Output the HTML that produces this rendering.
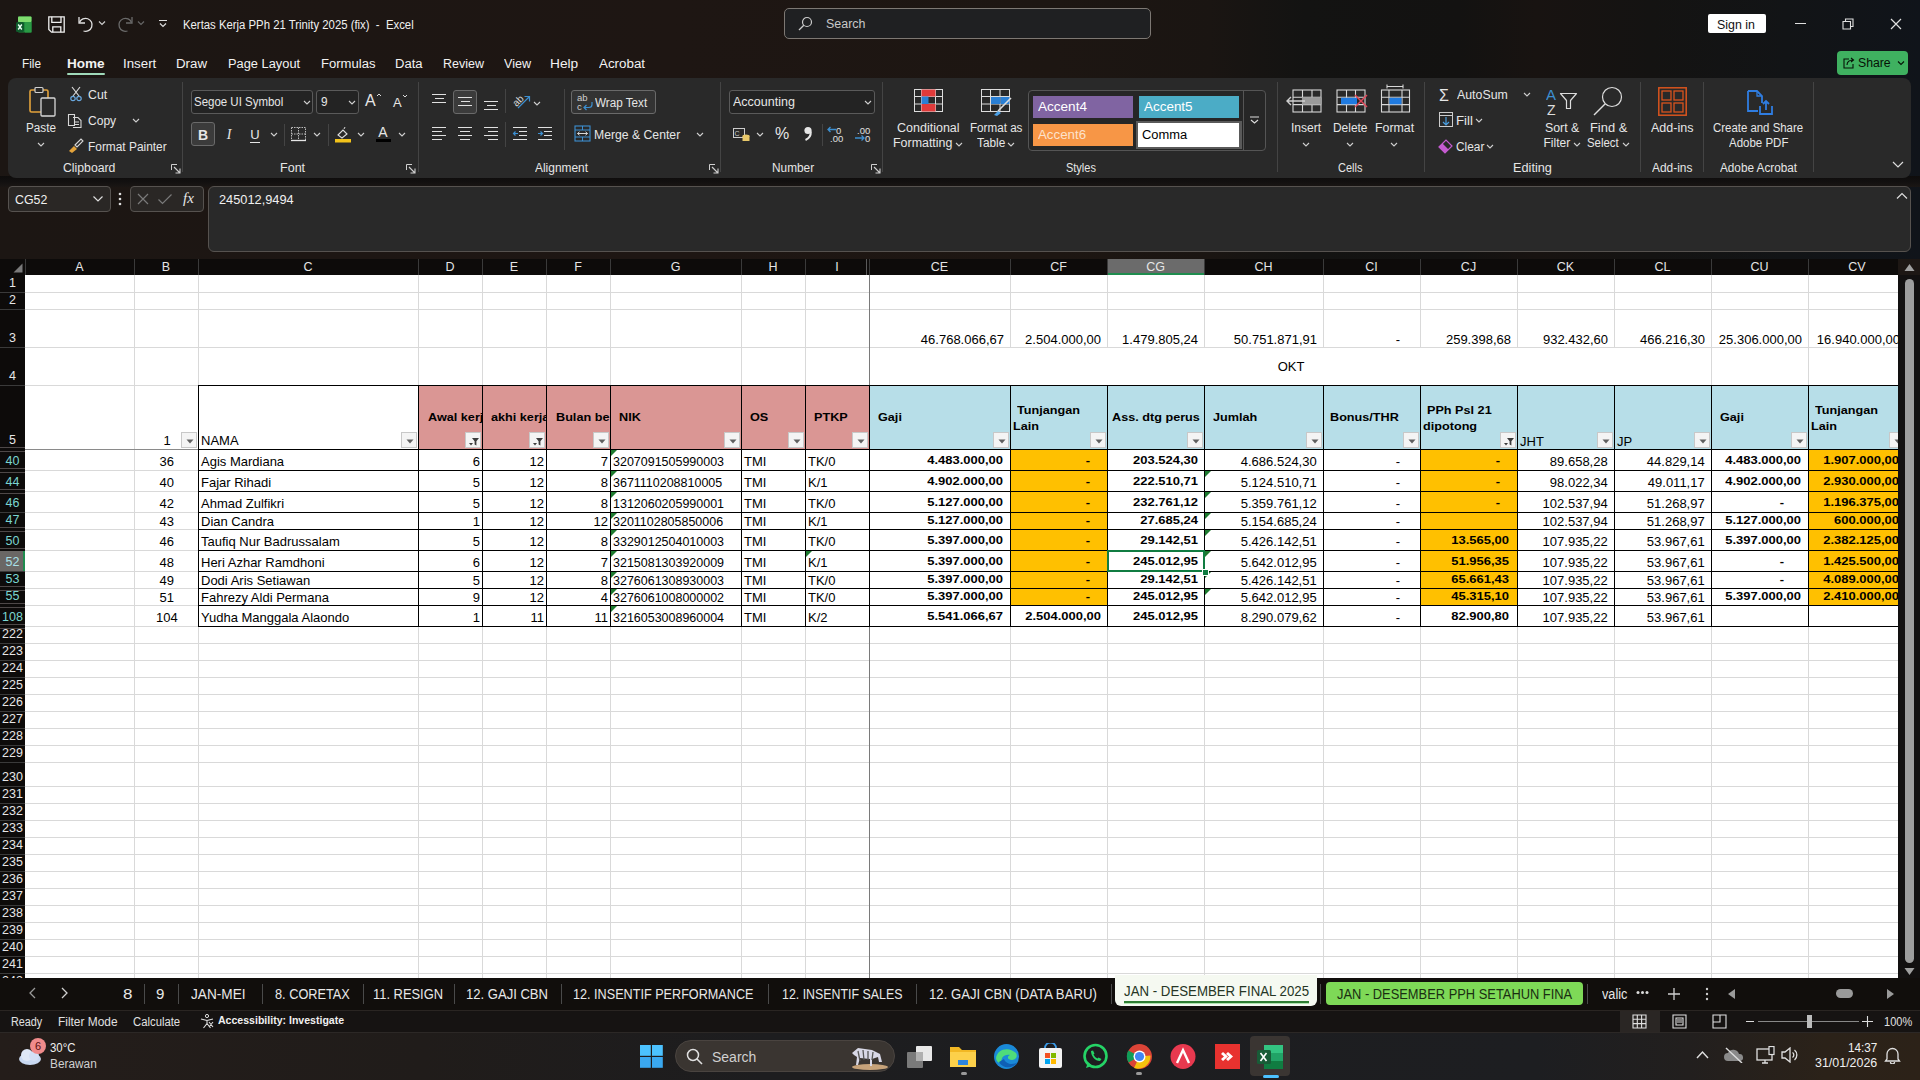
<!DOCTYPE html>
<html><head><meta charset="utf-8"><title>Excel</title>
<style>
html,body{margin:0;padding:0;width:1920px;height:1080px;overflow:hidden;background:#1d1714;}
body{position:relative;font-family:"Liberation Sans",sans-serif;}
body > div, body > svg{position:absolute;}
svg text{font-family:"Liberation Sans",sans-serif;}
</style></head><body>
<div style="left:0px;top:0px;width:1920px;height:259px;background:linear-gradient(90deg,#1c1613 0%,#1e1613 35%,#1d1612 55%,#1a1512 63%,#131312 68%,#131211 76%,#181311 80%,#141312 86%,#121416 93%,#10141a 100%)"></div>
<svg style="left:16px;top:15.5px" width="16" height="17" viewBox="0 0 16 17"><rect x="2" y="0.5" width="13.5" height="16" rx="1" fill="#1d8a3c"/><rect x="2" y="0.5" width="13.5" height="5.5" rx="1" fill="#7fdc6e"/><rect x="9" y="6" width="6.5" height="10.5" fill="#2a9a45"/><rect x="0" y="6" width="8" height="10" rx="1.5" fill="#0f5a2c"/><path d="M2.2 8.5l3.6 5M5.8 8.5l-3.6 5" stroke="#e8fff0" stroke-width="1.4"/></svg>
<svg style="left:47.5px;top:15.5px" width="17" height="17" viewBox="0 0 17 17"><path d="M0.8 0.8h15.4v15.4H3.5L0.8 13.5z" stroke="#f0f0f0" stroke-width="1.3" fill="none"/><path d="M3.8 0.8v5.6h9.2V0.8M4.8 16.2v-5.4h8v5.4" stroke="#f0f0f0" stroke-width="1.3" fill="none"/></svg>
<svg style="left:77px;top:15px" width="18" height="18" viewBox="0 0 18 18"><path d="M2 2v6h6" stroke="#e0e0e0" stroke-width="1.3" fill="none"/><path d="M2.5 7.5a6.5 6.5 0 1 1 4 8.5" stroke="#e0e0e0" stroke-width="1.3" fill="none"/></svg>
<svg style="left:98px;top:20px" width="8" height="6"><path d="M1 1.5l3 3 3-3" stroke="#ccc" stroke-width="1.2" fill="none"/></svg>
<svg style="left:116px;top:15px" width="18" height="18" viewBox="0 0 18 18"><path d="M16 2v6h-6" stroke="#6a6a6a" stroke-width="1.3" fill="none"/><path d="M15.5 7.5a6.5 6.5 0 1 0 -4 8.5" stroke="#6a6a6a" stroke-width="1.3" fill="none"/></svg>
<svg style="left:137px;top:20px" width="8" height="6"><path d="M1 1.5l3 3 3-3" stroke="#666" stroke-width="1.2" fill="none"/></svg>
<svg style="left:158px;top:19px" width="10" height="10"><path d="M1 1.5h8M2 4.5l3 3 3-3" stroke="#ddd" stroke-width="1.2" fill="none"/></svg>
<div style="left:182.59px;top:18.84px;font-size:12px;line-height:12px;color:#f0f0f0;font-weight:normal;white-space:pre;transform:scaleX(0.9450);transform-origin:0 0;">Kertas Kerja PPh 21 Trinity 2025 (fix)  -  Excel</div>
<div style="left:784px;top:8px;width:367px;height:31px;box-sizing:border-box;border:1px solid #7d7873;border-radius:5px;background:#1f2022"></div>
<svg style="left:797px;top:16px" width="16" height="16"><circle cx="10" cy="6" r="4.5" stroke="#ccc" stroke-width="1.2" fill="none"/><path d="M6.8 9.2L2 14" stroke="#ccc" stroke-width="1.3"/></svg>
<div style="left:825.94px;top:18.42px;font-size:12.5px;line-height:12.5px;color:#c8c8c8;font-weight:normal;white-space:pre;transform:scaleX(0.9951);transform-origin:0 0;">Search</div>
<div style="left:1708px;top:14px;width:58px;height:19px;background:#fff;border-radius:2px"></div>
<div style="left:1717.44px;top:19.14px;font-size:12px;line-height:12px;color:#111;font-weight:normal;white-space:pre;transform:scaleX(1.0328);transform-origin:0 0;">Sign in</div>
<div style="left:1795px;top:23px;width:11px;height:1px;background:#e0e0e0"></div>
<svg style="left:1842px;top:18px" width="12" height="12"><path d="M1 3.5h7.5V11H1z M3.5 3.5V1H11v7.5H8.5" stroke="#e0e0e0" stroke-width="1.1" fill="none"/></svg>
<svg style="left:1890px;top:18px" width="12" height="12"><path d="M1 1l10 10M11 1L1 11" stroke="#e0e0e0" stroke-width="1.2"/></svg>
<div style="left:21.86px;top:58.42px;font-size:12.5px;line-height:12.5px;color:#f2f2f2;font-weight:normal;white-space:pre;transform:scaleX(0.9428);transform-origin:0 0;">File</div>
<div style="left:66.62px;top:58.42px;font-size:12.5px;line-height:12.5px;color:#f2f2f2;font-weight:bold;white-space:pre;transform:scaleX(1.0841);transform-origin:0 0;">Home</div>
<div style="left:122.80px;top:58.42px;font-size:12.5px;line-height:12.5px;color:#f2f2f2;font-weight:normal;white-space:pre;transform:scaleX(1.0644);transform-origin:0 0;">Insert</div>
<div style="left:175.94px;top:58.42px;font-size:12.5px;line-height:12.5px;color:#f2f2f2;font-weight:normal;white-space:pre;transform:scaleX(1.0643);transform-origin:0 0;">Draw</div>
<div style="left:227.97px;top:58.42px;font-size:12.5px;line-height:12.5px;color:#f2f2f2;font-weight:normal;white-space:pre;transform:scaleX(1.0271);transform-origin:0 0;">Page Layout</div>
<div style="left:320.95px;top:58.42px;font-size:12.5px;line-height:12.5px;color:#f2f2f2;font-weight:normal;white-space:pre;transform:scaleX(1.0456);transform-origin:0 0;">Formulas</div>
<div style="left:394.96px;top:58.42px;font-size:12.5px;line-height:12.5px;color:#f2f2f2;font-weight:normal;white-space:pre;transform:scaleX(1.0443);transform-origin:0 0;">Data</div>
<div style="left:443.00px;top:58.42px;font-size:12.5px;line-height:12.5px;color:#f2f2f2;font-weight:normal;white-space:pre;transform:scaleX(1.0000);transform-origin:0 0;">Review</div>
<div style="left:503.94px;top:58.42px;font-size:12.5px;line-height:12.5px;color:#f2f2f2;font-weight:normal;white-space:pre;transform:scaleX(1.0070);transform-origin:0 0;">View</div>
<div style="left:549.90px;top:58.42px;font-size:12.5px;line-height:12.5px;color:#f2f2f2;font-weight:normal;white-space:pre;transform:scaleX(1.0956);transform-origin:0 0;">Help</div>
<div style="left:599.00px;top:58.42px;font-size:12.5px;line-height:12.5px;color:#f2f2f2;font-weight:normal;white-space:pre;transform:scaleX(1.0698);transform-origin:0 0;">Acrobat</div>
<div style="left:67px;top:73px;width:38px;height:2px;background:#9fd9b9;border-radius:1px"></div>
<div style="left:1837px;top:51px;width:71px;height:24px;background:#3fb160;border-radius:4px"></div>
<svg style="left:1842px;top:56px" width="14" height="14"><path d="M7 3H2v9h9V8" stroke="#061206" stroke-width="1.1" fill="none"/><path d="M5 9c0-3 2-5 6-5M9 2l2.5 2L9 6" stroke="#061206" stroke-width="1.1" fill="none"/></svg>
<div style="left:1857.95px;top:57.42px;font-size:12.5px;line-height:12.5px;color:#061206;font-weight:normal;white-space:pre;transform:scaleX(0.9786);transform-origin:0 0;">Share</div>
<svg style="left:1897px;top:60px" width="8" height="6"><path d="M1 1.5l3 3 3-3" stroke="#061206" stroke-width="1.1" fill="none"/></svg>
<div style="left:0;top:176px;width:1920px;height:11px;background:linear-gradient(180deg,#0e0c0b 0%,#121010 50%,#1a1614 100%)"></div>
<div style="left:8px;top:78px;width:1903px;height:100px;background:#292929;border-radius:8px"></div>
<div style="left:8px;top:186px;width:103px;height:26px;box-sizing:border-box;border:1px solid #56524f;border-radius:4px;background:#2a2725"></div>
<div style="left:14.68px;top:193.84px;font-size:12px;line-height:12px;color:#f0f0f0;font-weight:normal;white-space:pre;transform:scaleX(1.0292);transform-origin:0 0;">CG52</div>
<svg style="left:92px;top:194px" width="12" height="10"><path d="M1.5 2.5l4.5 4.5 4.5-4.5" stroke="#ddd" stroke-width="1.2" fill="none"/></svg>
<svg style="left:118px;top:191px" width="4" height="16"><circle cx="2" cy="3" r="1.3" fill="#ddd"/><circle cx="2" cy="8" r="1.3" fill="#ddd"/><circle cx="2" cy="13" r="1.3" fill="#ddd"/></svg>
<div style="left:130px;top:186px;width:74px;height:26px;box-sizing:border-box;border:1px solid #56524f;border-radius:4px;background:#2a2725"></div>
<svg style="left:136px;top:192px" width="14" height="14"><path d="M2 2l10 10M12 2L2 12" stroke="#7a7a7a" stroke-width="1.2"/></svg>
<svg style="left:157px;top:192px" width="16" height="14"><path d="M1.5 7.5l4 4 9-9" stroke="#7a7a7a" stroke-width="1.2" fill="none"/></svg>
<div style="left:183.00px;top:191.30px;font-size:15px;line-height:15px;color:#e8e8e8;font-weight:normal;white-space:pre;font-family:'Liberation Serif',serif;font-style:italic;">fx</div>
<div style="left:208px;top:186px;width:1703px;height:66px;box-sizing:border-box;border:1px solid #56524f;border-radius:6px;background:#292929"></div>
<div style="left:219.36px;top:193.84px;font-size:12px;line-height:12px;color:#f0f0f0;font-weight:normal;white-space:pre;transform:scaleX(1.0663);transform-origin:0 0;">245012,9494</div>
<svg style="left:1896px;top:192px" width="12" height="8"><path d="M1 6.5l5-5 5 5" stroke="#ddd" stroke-width="1.2" fill="none"/></svg>
<svg style="left:28px;top:86px" width="30" height="32" viewBox="0 0 30 32"><rect x="2" y="4" width="18" height="22" rx="1.5" stroke="#e3a33b" stroke-width="1.6" fill="none"/><rect x="7" y="1.5" width="8" height="5" rx="1" stroke="#d0d0d0" stroke-width="1.2" fill="#292929"/><rect x="13" y="12" width="14" height="18" rx="1" stroke="#d8d8d8" stroke-width="1.3" fill="#292929"/></svg>
<div style="left:26.06px;top:122.34px;font-size:12px;line-height:12px;color:#e6e6e6;font-weight:normal;white-space:pre;transform:scaleX(0.9774);transform-origin:0 0;">Paste</div>
<svg style="left:37px;top:142px" width="8" height="5" viewBox="0 0 8 5"><path d="M1 1l3 3 3-3" stroke="#d0d0d0" stroke-width="1.1" fill="none"/></svg>
<svg style="left:70px;top:86px" width="12" height="16" viewBox="0 0 12 16"><path d="M2 1l7 9M10 1L3 10" stroke="#d8d8d8" stroke-width="1.2"/><circle cx="3" cy="12.5" r="2.2" stroke="#6aa9e0" stroke-width="1.2" fill="none"/><circle cx="9" cy="12.5" r="2.2" stroke="#6aa9e0" stroke-width="1.2" fill="none"/></svg>
<div style="left:87.88px;top:88.84px;font-size:12px;line-height:12px;color:#e6e6e6;font-weight:normal;white-space:pre;transform:scaleX(1.0278);transform-origin:0 0;">Cut</div>
<svg style="left:67px;top:112px" width="17" height="16" viewBox="0 0 17 16"><path d="M1.5 2.5h6v11h-6zM6 5.5h5l3 3v7H6" stroke="#d8d8d8" stroke-width="1.1" fill="#292929"/><path d="M8 10h4M8 12.5h4" stroke="#d8d8d8" stroke-width="1"/></svg>
<div style="left:87.90px;top:115.34px;font-size:12px;line-height:12px;color:#e6e6e6;font-weight:normal;white-space:pre;transform:scaleX(1.0029);transform-origin:0 0;">Copy</div>
<svg style="left:132px;top:118px" width="8" height="5" viewBox="0 0 8 5"><path d="M1 1l3 3 3-3" stroke="#d0d0d0" stroke-width="1.1" fill="none"/></svg>
<svg style="left:67px;top:137px" width="18" height="16" viewBox="0 0 18 16"><path d="M2 14l5-5 3 3-5 4z" fill="#e3a33b"/><path d="M8 8l6-6 2 2-6 6z" stroke="#d8d8d8" stroke-width="1.1" fill="none"/></svg>
<div style="left:87.55px;top:140.84px;font-size:12px;line-height:12px;color:#e6e6e6;font-weight:normal;white-space:pre;transform:scaleX(0.9913);transform-origin:0 0;">Format Painter</div>
<div style="left:63.39px;top:161.84px;font-size:12px;line-height:12px;color:#e6e6e6;font-weight:normal;white-space:pre;transform:scaleX(1.0204);transform-origin:0 0;">Clipboard</div>
<svg style="left:171px;top:164px" width="10" height="10" viewBox="0 0 10 10"><path d="M0.5 6V0.5H6" stroke="#d0d0d0" stroke-width="1" fill="none"/><path d="M3 3l5.5 5.5M9 4.5V9H4.5" stroke="#d0d0d0" stroke-width="1.1" fill="none"/></svg>
<div style="left:182px;top:82px;width:1px;height:90px;background:#444"></div>
<div style="left:191px;top:90px;width:122px;height:24px;box-sizing:border-box;border:1px solid #5a5a5a;border-radius:3px;background:#232323"></div>
<div style="left:193.98px;top:96.14px;font-size:12px;line-height:12px;color:#e6e6e6;font-weight:normal;white-space:pre;transform:scaleX(0.9561);transform-origin:0 0;">Segoe UI Symbol</div>
<svg style="left:303px;top:100px" width="8" height="5" viewBox="0 0 8 5"><path d="M1 1l3 3 3-3" stroke="#d0d0d0" stroke-width="1.1" fill="none"/></svg>
<div style="left:316px;top:90px;width:43px;height:24px;box-sizing:border-box;border:1px solid #5a5a5a;border-radius:3px;background:#232323"></div>
<div style="left:321.47px;top:96.14px;font-size:12px;line-height:12px;color:#e6e6e6;font-weight:normal;white-space:pre;transform:scaleX(0.9857);transform-origin:0 0;">9</div>
<svg style="left:348px;top:100px" width="8" height="5" viewBox="0 0 8 5"><path d="M1 1l3 3 3-3" stroke="#d0d0d0" stroke-width="1.1" fill="none"/></svg>
<div style="left:365.00px;top:93.46px;font-size:16px;line-height:16px;color:#e6e6e6;font-weight:normal;white-space:pre;">A</div>
<svg style="left:376px;top:93px" width="6" height="4" viewBox="0 0 6 4"><path d="M1 3l2-2 2 2" stroke="#ddd" stroke-width="1" fill="none"/></svg>
<div style="left:393.00px;top:96.00px;font-size:13px;line-height:13px;color:#e6e6e6;font-weight:normal;white-space:pre;">A</div>
<svg style="left:402px;top:94px" width="6" height="4" viewBox="0 0 6 4"><path d="M1 1l2 2 2-2" stroke="#ddd" stroke-width="1" fill="none"/></svg>
<div style="left:191px;top:122px;width:24px;height:24px;box-sizing:border-box;border:1px solid #6a6a6a;border-radius:3px;background:#3b3b3b"></div>
<div style="left:-97.00px;top:128.15px;font-size:14px;line-height:14px;color:#e6e6e6;font-weight:bold;white-space:pre;width:600px;text-align:center;">B</div>
<div style="left:-71.00px;top:128.15px;font-size:14px;line-height:14px;color:#e6e6e6;font-weight:normal;white-space:pre;width:600px;text-align:center;font-family:'Liberation Serif',serif;font-style:italic">I</div>
<div style="left:-45.00px;top:128.00px;font-size:13px;line-height:13px;color:#e6e6e6;font-weight:normal;white-space:pre;width:600px;text-align:center;">U</div>
<div style="left:250px;top:142px;width:10px;height:1px;background:#e6e6e6"></div>
<svg style="left:270px;top:132px" width="8" height="5" viewBox="0 0 8 5"><path d="M1 1l3 3 3-3" stroke="#d0d0d0" stroke-width="1.1" fill="none"/></svg>
<div style="left:284px;top:124px;width:1px;height:22px;background:#444"></div>
<svg style="left:290px;top:126px" width="17" height="16" viewBox="0 0 17 16"><path d="M1.5 1.5h14v13h-14z" stroke="#bbb" stroke-width="1" stroke-dasharray="1.5 1" fill="none"/><path d="M8.5 1.5v13M1.5 8h14" stroke="#bbb" stroke-width="1" stroke-dasharray="1.5 1"/><path d="M1 14.5h15" stroke="#e6e6e6" stroke-width="1.3"/></svg>
<svg style="left:313px;top:132px" width="8" height="5" viewBox="0 0 8 5"><path d="M1 1l3 3 3-3" stroke="#d0d0d0" stroke-width="1.1" fill="none"/></svg>
<div style="left:328px;top:124px;width:1px;height:22px;background:#444"></div>
<svg style="left:335px;top:126px" width="17" height="17" viewBox="0 0 17 17"><path d="M3 9l5-5 4 4-5 4z" stroke="#ddd" stroke-width="1.1" fill="none"/><path d="M9 3l1-2" stroke="#ddd"/><rect x="0" y="13" width="16" height="3.5" fill="#f2c21a"/></svg>
<svg style="left:357px;top:132px" width="8" height="5" viewBox="0 0 8 5"><path d="M1 1l3 3 3-3" stroke="#d0d0d0" stroke-width="1.1" fill="none"/></svg>
<div style="left:83.00px;top:125.15px;font-size:14px;line-height:14px;color:#e6e6e6;font-weight:normal;white-space:pre;width:600px;text-align:center;">A</div>
<div style="left:376px;top:139px;width:15px;height:3px;background:#000"></div>
<svg style="left:398px;top:132px" width="8" height="5" viewBox="0 0 8 5"><path d="M1 1l3 3 3-3" stroke="#d0d0d0" stroke-width="1.1" fill="none"/></svg>
<div style="left:280.00px;top:161.84px;font-size:12px;line-height:12px;color:#e6e6e6;font-weight:normal;white-space:pre;transform:scaleX(1.0444);transform-origin:0 0;">Font</div>
<svg style="left:406px;top:164px" width="10" height="10" viewBox="0 0 10 10"><path d="M0.5 6V0.5H6" stroke="#d0d0d0" stroke-width="1" fill="none"/><path d="M3 3l5.5 5.5M9 4.5V9H4.5" stroke="#d0d0d0" stroke-width="1.1" fill="none"/></svg>
<div style="left:418px;top:82px;width:1px;height:90px;background:#444"></div>
<svg style="left:431px;top:92px" width="17" height="14" viewBox="0 0 17 14"><path d="M1 2.5H15" stroke="#e0e0e0" stroke-width="1"/><path d="M4 6.5H13" stroke="#e0e0e0" stroke-width="1"/><path d="M1 10.5H15" stroke="#e0e0e0" stroke-width="1"/></svg>
<div style="left:453px;top:90px;width:24px;height:24px;box-sizing:border-box;border:1px solid #6a6a6a;border-radius:3px;background:#3b3b3b"></div>
<svg style="left:457px;top:95px" width="17" height="14" viewBox="0 0 17 14"><path d="M1 2.5H15" stroke="#e0e0e0" stroke-width="1"/><path d="M4 6.5H13" stroke="#e0e0e0" stroke-width="1"/><path d="M1 10.5H15" stroke="#e0e0e0" stroke-width="1"/></svg>
<svg style="left:483px;top:99px" width="17" height="14" viewBox="0 0 17 14"><path d="M1 2.5H15" stroke="#e0e0e0" stroke-width="1"/><path d="M4 6.5H13" stroke="#e0e0e0" stroke-width="1"/><path d="M1 10.5H15" stroke="#e0e0e0" stroke-width="1"/></svg>
<div style="left:505px;top:89px;width:1px;height:24px;background:#444"></div>
<svg style="left:511px;top:91px" width="22" height="20" viewBox="0 0 22 20"><text x="1" y="13" font-size="10" fill="#d8d8d8" font-family="Liberation Sans" transform="rotate(-45 7 9)">ab</text><path d="M7 17l11-11M13.5 5.5h5v5" stroke="#3d8fd0" stroke-width="1.2" fill="none"/></svg>
<svg style="left:533px;top:101px" width="8" height="5" viewBox="0 0 8 5"><path d="M1 1l3 3 3-3" stroke="#d0d0d0" stroke-width="1.1" fill="none"/></svg>
<svg style="left:431px;top:125px" width="17" height="16" viewBox="0 0 17 16"><path d="M1 2.5H15" stroke="#e0e0e0" stroke-width="1"/><path d="M1 6.5H11" stroke="#e0e0e0" stroke-width="1"/><path d="M1 10.5H15" stroke="#e0e0e0" stroke-width="1"/><path d="M1 14.5H11" stroke="#e0e0e0" stroke-width="1"/></svg>
<svg style="left:457px;top:125px" width="17" height="16" viewBox="0 0 17 16"><path d="M1 2.5H15" stroke="#e0e0e0" stroke-width="1"/><path d="M3 6.5H13" stroke="#e0e0e0" stroke-width="1"/><path d="M1 10.5H15" stroke="#e0e0e0" stroke-width="1"/><path d="M3 14.5H13" stroke="#e0e0e0" stroke-width="1"/></svg>
<svg style="left:483px;top:125px" width="17" height="16" viewBox="0 0 17 16"><path d="M1 2.5H15" stroke="#e0e0e0" stroke-width="1"/><path d="M5 6.5H15" stroke="#e0e0e0" stroke-width="1"/><path d="M1 10.5H15" stroke="#e0e0e0" stroke-width="1"/><path d="M5 14.5H15" stroke="#e0e0e0" stroke-width="1"/></svg>
<div style="left:505px;top:122px;width:1px;height:25px;background:#444"></div>
<svg style="left:512px;top:125px" width="17" height="16" viewBox="0 0 17 16"><path d="M1 2.5H15" stroke="#e0e0e0" stroke-width="1"/><path d="M7 6.5H15" stroke="#e0e0e0" stroke-width="1"/><path d="M7 10.5H15" stroke="#e0e0e0" stroke-width="1"/><path d="M1 14.5H15" stroke="#e0e0e0" stroke-width="1"/><path d="M6 8.5H1.5M3.5 6.5l-2 2 2 2" stroke="#3d8fd0" stroke-width="1.2" fill="none"/></svg>
<svg style="left:537px;top:125px" width="17" height="16" viewBox="0 0 17 16"><path d="M1 2.5H15" stroke="#e0e0e0" stroke-width="1"/><path d="M7 6.5H15" stroke="#e0e0e0" stroke-width="1"/><path d="M7 10.5H15" stroke="#e0e0e0" stroke-width="1"/><path d="M1 14.5H15" stroke="#e0e0e0" stroke-width="1"/><path d="M1 8.5H5.5M3.5 6.5l2 2-2 2" stroke="#3d8fd0" stroke-width="1.2" fill="none"/></svg>
<div style="left:564px;top:89px;width:1px;height:61px;background:#444"></div>
<div style="left:571px;top:90px;width:85px;height:24px;box-sizing:border-box;border:1px solid #6a6a6a;border-radius:3px;background:#333"></div>
<svg style="left:576px;top:92px" width="18" height="20" viewBox="0 0 18 20"><text x="1" y="9" font-size="9.5" fill="#d0d0d0" font-family="Liberation Sans">ab</text><text x="1" y="18" font-size="9.5" fill="#d0d0d0" font-family="Liberation Sans">c</text><path d="M16 10v2.5c0 2-1 3-3 3H8M10.5 13l-2.5 2.5 2.5 2.5" stroke="#3d8fd0" stroke-width="1.2" fill="none"/></svg>
<div style="left:594.94px;top:96.64px;font-size:12px;line-height:12px;color:#e6e6e6;font-weight:normal;white-space:pre;transform:scaleX(0.9738);transform-origin:0 0;">Wrap Text</div>
<svg style="left:574px;top:125px" width="17" height="17" viewBox="0 0 17 17"><rect x="1" y="1" width="15" height="15" stroke="#3d8fd0" stroke-width="1.1" fill="none"/><path d="M1 5h15M1 12h15M8.5 1v4M8.5 12v4" stroke="#3d8fd0" stroke-width="1"/><path d="M3.5 8.5h10M5.5 6.8L3.5 8.5l2 1.7M11.5 6.8l2 1.7-2 1.7" stroke="#d8d8d8" stroke-width="1" fill="none"/></svg>
<div style="left:594.02px;top:129.14px;font-size:12px;line-height:12px;color:#e6e6e6;font-weight:normal;white-space:pre;transform:scaleX(1.0177);transform-origin:0 0;">Merge &amp; Center</div>
<svg style="left:696px;top:132px" width="8" height="5" viewBox="0 0 8 5"><path d="M1 1l3 3 3-3" stroke="#d0d0d0" stroke-width="1.1" fill="none"/></svg>
<div style="left:535.00px;top:161.84px;font-size:12px;line-height:12px;color:#e6e6e6;font-weight:normal;white-space:pre;transform:scaleX(0.9947);transform-origin:0 0;">Alignment</div>
<svg style="left:709px;top:164px" width="10" height="10" viewBox="0 0 10 10"><path d="M0.5 6V0.5H6" stroke="#d0d0d0" stroke-width="1" fill="none"/><path d="M3 3l5.5 5.5M9 4.5V9H4.5" stroke="#d0d0d0" stroke-width="1.1" fill="none"/></svg>
<div style="left:720px;top:82px;width:1px;height:90px;background:#444"></div>
<div style="left:729px;top:90px;width:146px;height:24px;box-sizing:border-box;border:1px solid #5a5a5a;border-radius:3px;background:#232323"></div>
<div style="left:732.50px;top:96.04px;font-size:12px;line-height:12px;color:#e6e6e6;font-weight:normal;white-space:pre;transform:scaleX(1.0417);transform-origin:0 0;">Accounting</div>
<svg style="left:864px;top:100px" width="8" height="5" viewBox="0 0 8 5"><path d="M1 1l3 3 3-3" stroke="#d0d0d0" stroke-width="1.1" fill="none"/></svg>
<svg style="left:733px;top:128px" width="17" height="14" viewBox="0 0 17 14"><rect x="0.5" y="0.5" width="11" height="9" stroke="#ccc" fill="none"/><text x="1.5" y="8" font-size="7" fill="#ccc" font-family="Liberation Sans">C</text><ellipse cx="13" cy="8" rx="3.5" ry="1.5" fill="#e8c86a"/><rect x="9.5" y="8" width="7" height="5" fill="#e8c86a"/></svg>
<svg style="left:756px;top:132px" width="8" height="5" viewBox="0 0 8 5"><path d="M1 1l3 3 3-3" stroke="#d0d0d0" stroke-width="1.1" fill="none"/></svg>
<div style="left:482.00px;top:126.46px;font-size:16px;line-height:16px;color:#e6e6e6;font-weight:normal;white-space:pre;width:600px;text-align:center;">%</div>
<svg style="left:803px;top:126px" width="10" height="15" viewBox="0 0 10 15"><circle cx="5" cy="4.5" r="3.6" fill="#e6e6e6"/><path d="M7.8 5.5C8 9.5 6 12.5 2.5 14" stroke="#e6e6e6" stroke-width="2" fill="none"/></svg>
<div style="left:822px;top:124px;width:1px;height:22px;background:#444"></div>
<svg style="left:826px;top:125px" width="20" height="18" viewBox="0 0 20 18"><text x="10" y="8.5" font-size="9.5" fill="#e0e0e0" font-family="Liberation Sans">0</text><text x="4" y="16.5" font-size="9.5" fill="#e0e0e0" font-family="Liberation Sans">.00</text><path d="M10 4.5H2M4.5 2L2 4.5 4.5 7" stroke="#3d8fd0" stroke-width="1.3" fill="none"/></svg>
<svg style="left:852px;top:125px" width="20" height="18" viewBox="0 0 20 18"><text x="5" y="8.5" font-size="9.5" fill="#e0e0e0" font-family="Liberation Sans">.00</text><text x="13" y="16.5" font-size="9.5" fill="#e0e0e0" font-family="Liberation Sans">0</text><path d="M3 13h9M9.5 10.5L12 13l-2.5 2.5" stroke="#3d8fd0" stroke-width="1.3" fill="none"/></svg>
<div style="left:772.05px;top:161.84px;font-size:12px;line-height:12px;color:#e6e6e6;font-weight:normal;white-space:pre;transform:scaleX(0.9875);transform-origin:0 0;">Number</div>
<svg style="left:871px;top:164px" width="10" height="10" viewBox="0 0 10 10"><path d="M0.5 6V0.5H6" stroke="#d0d0d0" stroke-width="1" fill="none"/><path d="M3 3l5.5 5.5M9 4.5V9H4.5" stroke="#d0d0d0" stroke-width="1.1" fill="none"/></svg>
<div style="left:882px;top:82px;width:1px;height:90px;background:#444"></div>
<svg style="left:914px;top:89px" width="29" height="23" viewBox="0 0 29 23"><rect x="0.5" y="0.5" width="28" height="22" fill="none" stroke="#ddd"/><path d="M0.5 7.5h28M0.5 15h28M7.5 0.5v22M21.5 0.5v22" stroke="#ddd"/><rect x="7.5" y="0.5" width="14" height="7" fill="#e03a3a"/><rect x="7.5" y="15" width="14" height="7.5" fill="#e03a3a"/><rect x="7.5" y="7.5" width="7" height="7.5" fill="#2a7fd4"/></svg>
<div style="left:896.97px;top:121.84px;font-size:12px;line-height:12px;color:#e6e6e6;font-weight:normal;white-space:pre;transform:scaleX(1.0423);transform-origin:0 0;">Conditional</div>
<div style="left:892.71px;top:137.34px;font-size:12px;line-height:12px;color:#e6e6e6;font-weight:normal;white-space:pre;transform:scaleX(1.0356);transform-origin:0 0;">Formatting</div>
<svg style="left:955px;top:142px" width="8" height="5" viewBox="0 0 8 5"><path d="M1 1l3 3 3-3" stroke="#d0d0d0" stroke-width="1.1" fill="none"/></svg>
<svg style="left:981px;top:89px" width="32" height="28" viewBox="0 0 32 28"><rect x="0.5" y="0.5" width="28" height="22" fill="none" stroke="#ddd"/><path d="M0.5 7.5h28M0.5 15h28M9.5 0.5v22M19 0.5v22" stroke="#ddd"/><rect x="10" y="8" width="9" height="7" fill="#2a7fd4"/><rect x="19.5" y="8" width="9" height="7" fill="#2a7fd4"/><path d="M13 26l4-4 3 2-4 3z" fill="#4aa0e6"/><path d="M17 22l13-13" stroke="#ddd" stroke-width="1.6"/></svg>
<div style="left:969.67px;top:121.84px;font-size:12px;line-height:12px;color:#e6e6e6;font-weight:normal;white-space:pre;transform:scaleX(0.9711);transform-origin:0 0;">Format as</div>
<div style="left:976.76px;top:137.34px;font-size:12px;line-height:12px;color:#e6e6e6;font-weight:normal;white-space:pre;transform:scaleX(0.9857);transform-origin:0 0;">Table</div>
<svg style="left:1006.5px;top:142px" width="8" height="5" viewBox="0 0 8 5"><path d="M1 1l3 3 3-3" stroke="#d0d0d0" stroke-width="1.1" fill="none"/></svg>
<div style="left:1028px;top:90px;width:238px;height:61px;box-sizing:border-box;border:1px solid #555;border-radius:4px;background:#262626"></div>
<div style="left:1033px;top:96px;width:100px;height:22px;background:#8064a2"></div>
<div style="left:1037.50px;top:101.34px;font-size:12px;line-height:12px;color:#fff;font-weight:normal;white-space:pre;transform:scaleX(1.1290);transform-origin:0 0;">Accent4</div>
<div style="left:1139px;top:96px;width:100px;height:22px;background:#4bacc6"></div>
<div style="left:1144.00px;top:101.34px;font-size:12px;line-height:12px;color:#fff;font-weight:normal;white-space:pre;transform:scaleX(1.1204);transform-origin:0 0;">Accent5</div>
<div style="left:1033px;top:124px;width:100px;height:22px;background:#f79646"></div>
<div style="left:1037.50px;top:129.34px;font-size:12px;line-height:12px;color:#fde2cc;font-weight:normal;white-space:pre;transform:scaleX(1.1088);transform-origin:0 0;">Accent6</div>
<div style="left:1136px;top:121px;width:106px;height:28px;background:#5a5a5a"></div>
<div style="left:1138px;top:123px;width:101px;height:24px;background:#fff"></div>
<div style="left:1142.36px;top:129.34px;font-size:12px;line-height:12px;color:#000;font-weight:normal;white-space:pre;transform:scaleX(1.0749);transform-origin:0 0;">Comma</div>
<div style="left:1243px;top:91px;width:1px;height:59px;background:#555"></div>
<svg style="left:1249px;top:116px" width="11" height="8" viewBox="0 0 11 8"><path d="M1 1h9M2 4l3.5 3 3.5-3" stroke="#ddd" stroke-width="1.1" fill="none"/></svg>
<div style="left:1065.51px;top:161.84px;font-size:12px;line-height:12px;color:#e6e6e6;font-weight:normal;white-space:pre;transform:scaleX(0.9137);transform-origin:0 0;">Styles</div>
<div style="left:1277px;top:82px;width:1px;height:90px;background:#444"></div>
<svg style="left:1285px;top:89px" width="40" height="24" viewBox="0 0 40 24"><rect x="8" y="1" width="28" height="22" stroke="#d8d8d8" stroke-width="1.1" fill="none"/><path d="M17.5 1v22M27 1v22M8 8.3h28M8 15.6h28" stroke="#d8d8d8" stroke-width="1.1"/><rect x="17" y="8.3" width="20" height="7.3" fill="#9a9a9a"/><path d="M20 12H2M6 8L2 12l4 4" stroke="#cfcfcf" stroke-width="1.4" fill="none"/></svg>
<div style="left:1290.91px;top:121.84px;font-size:12px;line-height:12px;color:#e6e6e6;font-weight:normal;white-space:pre;transform:scaleX(1.0049);transform-origin:0 0;">Insert</div>
<svg style="left:1302px;top:142px" width="8" height="5" viewBox="0 0 8 5"><path d="M1 1l3 3 3-3" stroke="#d0d0d0" stroke-width="1.1" fill="none"/></svg>
<svg style="left:1336px;top:89px" width="32" height="24" viewBox="0 0 32 24"><rect x="1" y="1" width="28" height="22" stroke="#d8d8d8" stroke-width="1.1" fill="none"/><path d="M10.5 1v22M19.5 1v22M1 8.3h28M1 15.6h28" stroke="#d8d8d8" stroke-width="1.1"/><rect x="5" y="8.8" width="16" height="6.5" fill="#1f7ae0"/><path d="M19 6l12 12M31 6L19 18" stroke="#e0485a" stroke-width="1.5"/></svg>
<div style="left:1333.05px;top:121.84px;font-size:12px;line-height:12px;color:#e6e6e6;font-weight:normal;white-space:pre;transform:scaleX(0.9946);transform-origin:0 0;">Delete</div>
<svg style="left:1346px;top:142px" width="8" height="5" viewBox="0 0 8 5"><path d="M1 1l3 3 3-3" stroke="#d0d0d0" stroke-width="1.1" fill="none"/></svg>
<svg style="left:1380px;top:84px" width="31" height="30" viewBox="0 0 31 30"><path d="M7 2.5h16M7 0.5v4M23 0.5v4" stroke="#d8d8d8" stroke-width="1.1"/><rect x="1.5" y="6" width="28" height="22" stroke="#d8d8d8" stroke-width="1.1" fill="none"/><path d="M9 6v22M22 6v22M1.5 13.3h28M1.5 20.6h28" stroke="#d8d8d8" stroke-width="1.1"/><rect x="9.5" y="13.8" width="12" height="6.5" fill="#1f7ae0"/></svg>
<div style="left:1375.01px;top:121.84px;font-size:12px;line-height:12px;color:#e6e6e6;font-weight:normal;white-space:pre;transform:scaleX(1.0281);transform-origin:0 0;">Format</div>
<svg style="left:1390px;top:142px" width="8" height="5" viewBox="0 0 8 5"><path d="M1 1l3 3 3-3" stroke="#d0d0d0" stroke-width="1.1" fill="none"/></svg>
<div style="left:1338.45px;top:161.84px;font-size:12px;line-height:12px;color:#e6e6e6;font-weight:normal;white-space:pre;transform:scaleX(0.9151);transform-origin:0 0;">Cells</div>
<div style="left:1424px;top:82px;width:1px;height:90px;background:#444"></div>
<div style="left:1439.00px;top:88.46px;font-size:16px;line-height:16px;color:#e6e6e6;font-weight:normal;white-space:pre;">Σ</div>
<div style="left:1457.00px;top:88.84px;font-size:12px;line-height:12px;color:#e6e6e6;font-weight:normal;white-space:pre;transform:scaleX(1.0288);transform-origin:0 0;">AutoSum</div>
<svg style="left:1523px;top:92px" width="8" height="5" viewBox="0 0 8 5"><path d="M1 1l3 3 3-3" stroke="#d0d0d0" stroke-width="1.1" fill="none"/></svg>
<svg style="left:1439px;top:112px" width="14" height="16" viewBox="0 0 14 16"><rect x="0.5" y="0.5" width="13" height="14" stroke="#ccc" fill="none"/><path d="M0.5 3.5h13" stroke="#ccc"/><path d="M7 5v8M4 10l3 3 3-3" stroke="#4a9ee0" stroke-width="1.2" fill="none"/></svg>
<div style="left:1455.94px;top:115.34px;font-size:12px;line-height:12px;color:#e6e6e6;font-weight:normal;white-space:pre;transform:scaleX(1.1062);transform-origin:0 0;">Fill</div>
<svg style="left:1475px;top:118px" width="8" height="5" viewBox="0 0 8 5"><path d="M1 1l3 3 3-3" stroke="#d0d0d0" stroke-width="1.1" fill="none"/></svg>
<svg style="left:1438px;top:138px" width="16" height="16" viewBox="0 0 16 16"><path d="M1 9l7-7 6 6-7 7z" stroke="#c45bd0" stroke-width="1.2" fill="none"/><path d="M1 9l3.5-3.5 6 6L7 15z" fill="#c45bd0"/></svg>
<div style="left:1456.41px;top:140.84px;font-size:12px;line-height:12px;color:#e6e6e6;font-weight:normal;white-space:pre;transform:scaleX(0.9878);transform-origin:0 0;">Clear</div>
<svg style="left:1486px;top:144px" width="8" height="5" viewBox="0 0 8 5"><path d="M1 1l3 3 3-3" stroke="#d0d0d0" stroke-width="1.1" fill="none"/></svg>
<svg style="left:1546px;top:86px" width="34" height="30" viewBox="0 0 34 30"><text x="0" y="14" font-size="15" fill="#3d8fd0" font-family="Liberation Sans">A</text><text x="1" y="28.5" font-size="14" fill="#dcdcdc" font-family="Liberation Sans">Z</text><path d="M14.5 7.5h16l-6 7v8l-4 0v-8z" stroke="#dcdcdc" stroke-width="1.2" fill="none" stroke-linejoin="round"/></svg>
<div style="left:1545.44px;top:121.84px;font-size:12px;line-height:12px;color:#e6e6e6;font-weight:normal;white-space:pre;transform:scaleX(1.0282);transform-origin:0 0;">Sort &amp;</div>
<div style="left:1543.54px;top:137.34px;font-size:12px;line-height:12px;color:#e6e6e6;font-weight:normal;white-space:pre;transform:scaleX(1.0000);transform-origin:0 0;">Filter</div>
<svg style="left:1573px;top:142px" width="8" height="5" viewBox="0 0 8 5"><path d="M1 1l3 3 3-3" stroke="#d0d0d0" stroke-width="1.1" fill="none"/></svg>
<svg style="left:1593px;top:86px" width="32" height="30" viewBox="0 0 32 30"><circle cx="19" cy="11" r="9.5" stroke="#ddd" stroke-width="1.2" fill="none"/><path d="M12 18L1 29" stroke="#ddd" stroke-width="1.4"/></svg>
<div style="left:1589.97px;top:121.84px;font-size:12px;line-height:12px;color:#e6e6e6;font-weight:normal;white-space:pre;transform:scaleX(1.0733);transform-origin:0 0;">Find &amp;</div>
<div style="left:1587.49px;top:137.34px;font-size:12px;line-height:12px;color:#e6e6e6;font-weight:normal;white-space:pre;transform:scaleX(0.9480);transform-origin:0 0;">Select</div>
<svg style="left:1622px;top:142px" width="8" height="5" viewBox="0 0 8 5"><path d="M1 1l3 3 3-3" stroke="#d0d0d0" stroke-width="1.1" fill="none"/></svg>
<div style="left:1512.98px;top:161.84px;font-size:12px;line-height:12px;color:#e6e6e6;font-weight:normal;white-space:pre;transform:scaleX(1.0596);transform-origin:0 0;">Editing</div>
<div style="left:1640px;top:82px;width:1px;height:90px;background:#444"></div>
<svg style="left:1658px;top:87px" width="29" height="29" viewBox="0 0 29 29"><rect x="0.8" y="0.8" width="27.4" height="27.4" stroke="#d9541e" stroke-width="1.5" fill="none"/><rect x="4" y="4" width="9" height="9" stroke="#d9541e" stroke-width="1.3" fill="none"/><rect x="16" y="4" width="9" height="9" stroke="#d9541e" stroke-width="1.3" fill="none"/><rect x="4" y="16" width="9" height="9" stroke="#d9541e" stroke-width="1.3" fill="none"/><rect x="16" y="16" width="9" height="9" stroke="#d9541e" stroke-width="1.3" fill="none"/></svg>
<div style="left:1651.00px;top:121.84px;font-size:12px;line-height:12px;color:#e6e6e6;font-weight:normal;white-space:pre;transform:scaleX(1.0432);transform-origin:0 0;">Add-ins</div>
<div style="left:1652.00px;top:161.84px;font-size:12px;line-height:12px;color:#e6e6e6;font-weight:normal;white-space:pre;transform:scaleX(0.9935);transform-origin:0 0;">Add-ins</div>
<div style="left:1703px;top:82px;width:1px;height:90px;background:#444"></div>
<svg style="left:1746px;top:89px" width="28" height="28" viewBox="0 0 28 28"><path d="M2 2h9l5 5v7" stroke="#2f7de1" stroke-width="1.8" fill="none"/><path d="M2 2v20h10" stroke="#2f7de1" stroke-width="1.8" fill="none"/><path d="M11 2v5h5" stroke="#2f7de1" stroke-width="1.3" fill="none"/><path d="M14 17v8h12v-8M20 21v-9M17 15l3-3 3 3" stroke="#2f7de1" stroke-width="1.8" fill="none"/></svg>
<div style="left:1713.43px;top:121.84px;font-size:12px;line-height:12px;color:#e6e6e6;font-weight:normal;white-space:pre;transform:scaleX(0.9509);transform-origin:0 0;">Create and Share</div>
<div style="left:1729.00px;top:137.34px;font-size:12px;line-height:12px;color:#e6e6e6;font-weight:normal;white-space:pre;transform:scaleX(0.9584);transform-origin:0 0;">Adobe PDF</div>
<div style="left:1720.00px;top:161.84px;font-size:12px;line-height:12px;color:#e6e6e6;font-weight:normal;white-space:pre;transform:scaleX(0.9789);transform-origin:0 0;">Adobe Acrobat</div>
<div style="left:1813px;top:82px;width:1px;height:90px;background:#444"></div>
<svg style="left:1892px;top:161px" width="12" height="7" viewBox="0 0 12 7"><path d="M1 1l5 5 5-5" stroke="#ddd" stroke-width="1.2" fill="none"/></svg>
<div style="left:25px;top:275px;width:1873px;height:703px;background:#fff"></div>
<div style="left:25px;top:292px;width:1873px;height:1px;background:#d9d9d9"></div>
<div style="left:25px;top:309px;width:1873px;height:1px;background:#d9d9d9"></div>
<div style="left:25px;top:347px;width:1873px;height:1px;background:#d9d9d9"></div>
<div style="left:25px;top:385px;width:1873px;height:1px;background:#d9d9d9"></div>
<div style="left:25px;top:449px;width:1873px;height:1px;background:#d9d9d9"></div>
<div style="left:25px;top:470px;width:1873px;height:1px;background:#d9d9d9"></div>
<div style="left:25px;top:491px;width:1873px;height:1px;background:#d9d9d9"></div>
<div style="left:25px;top:512px;width:1873px;height:1px;background:#d9d9d9"></div>
<div style="left:25px;top:529px;width:1873px;height:1px;background:#d9d9d9"></div>
<div style="left:25px;top:550px;width:1873px;height:1px;background:#d9d9d9"></div>
<div style="left:25px;top:571px;width:1873px;height:1px;background:#d9d9d9"></div>
<div style="left:25px;top:588px;width:1873px;height:1px;background:#d9d9d9"></div>
<div style="left:25px;top:605px;width:1873px;height:1px;background:#d9d9d9"></div>
<div style="left:25px;top:626px;width:1873px;height:1px;background:#d9d9d9"></div>
<div style="left:25px;top:643px;width:1873px;height:1px;background:#d9d9d9"></div>
<div style="left:25px;top:660px;width:1873px;height:1px;background:#d9d9d9"></div>
<div style="left:25px;top:677px;width:1873px;height:1px;background:#d9d9d9"></div>
<div style="left:25px;top:694px;width:1873px;height:1px;background:#d9d9d9"></div>
<div style="left:25px;top:711px;width:1873px;height:1px;background:#d9d9d9"></div>
<div style="left:25px;top:728px;width:1873px;height:1px;background:#d9d9d9"></div>
<div style="left:25px;top:745px;width:1873px;height:1px;background:#d9d9d9"></div>
<div style="left:25px;top:762px;width:1873px;height:1px;background:#d9d9d9"></div>
<div style="left:25px;top:786px;width:1873px;height:1px;background:#d9d9d9"></div>
<div style="left:25px;top:803px;width:1873px;height:1px;background:#d9d9d9"></div>
<div style="left:25px;top:820px;width:1873px;height:1px;background:#d9d9d9"></div>
<div style="left:25px;top:837px;width:1873px;height:1px;background:#d9d9d9"></div>
<div style="left:25px;top:854px;width:1873px;height:1px;background:#d9d9d9"></div>
<div style="left:25px;top:871px;width:1873px;height:1px;background:#d9d9d9"></div>
<div style="left:25px;top:888px;width:1873px;height:1px;background:#d9d9d9"></div>
<div style="left:25px;top:905px;width:1873px;height:1px;background:#d9d9d9"></div>
<div style="left:25px;top:922px;width:1873px;height:1px;background:#d9d9d9"></div>
<div style="left:25px;top:939px;width:1873px;height:1px;background:#d9d9d9"></div>
<div style="left:25px;top:956px;width:1873px;height:1px;background:#d9d9d9"></div>
<div style="left:25px;top:973px;width:1873px;height:1px;background:#d9d9d9"></div>
<div style="left:134px;top:275px;width:1px;height:703px;background:#d9d9d9"></div>
<div style="left:198px;top:275px;width:1px;height:703px;background:#d9d9d9"></div>
<div style="left:418px;top:275px;width:1px;height:703px;background:#d9d9d9"></div>
<div style="left:482px;top:275px;width:1px;height:703px;background:#d9d9d9"></div>
<div style="left:546px;top:275px;width:1px;height:703px;background:#d9d9d9"></div>
<div style="left:610px;top:275px;width:1px;height:703px;background:#d9d9d9"></div>
<div style="left:741px;top:275px;width:1px;height:703px;background:#d9d9d9"></div>
<div style="left:805px;top:275px;width:1px;height:703px;background:#d9d9d9"></div>
<div style="left:869px;top:275px;width:1px;height:703px;background:#d9d9d9"></div>
<div style="left:1010px;top:275px;width:1px;height:703px;background:#d9d9d9"></div>
<div style="left:1107px;top:275px;width:1px;height:703px;background:#d9d9d9"></div>
<div style="left:1204px;top:275px;width:1px;height:703px;background:#d9d9d9"></div>
<div style="left:1323px;top:275px;width:1px;height:703px;background:#d9d9d9"></div>
<div style="left:1420px;top:275px;width:1px;height:703px;background:#d9d9d9"></div>
<div style="left:1517px;top:275px;width:1px;height:703px;background:#d9d9d9"></div>
<div style="left:1614px;top:275px;width:1px;height:703px;background:#d9d9d9"></div>
<div style="left:1711px;top:275px;width:1px;height:703px;background:#d9d9d9"></div>
<div style="left:1808px;top:275px;width:1px;height:703px;background:#d9d9d9"></div>
<div style="left:870px;top:348px;width:841px;height:37px;background:#fff"></div>
<div style="left:25px;top:449px;width:173px;height:1px;background:#8a8a8a"></div>
<div style="left:418px;top:385px;width:64px;height:64px;background:#da9694"></div>
<div style="left:482px;top:385px;width:64px;height:64px;background:#da9694"></div>
<div style="left:546px;top:385px;width:64px;height:64px;background:#da9694"></div>
<div style="left:610px;top:385px;width:131px;height:64px;background:#da9694"></div>
<div style="left:741px;top:385px;width:64px;height:64px;background:#da9694"></div>
<div style="left:805px;top:385px;width:64px;height:64px;background:#da9694"></div>
<div style="left:869px;top:385px;width:141px;height:64px;background:#b7dee8"></div>
<div style="left:1010px;top:385px;width:97px;height:64px;background:#b7dee8"></div>
<div style="left:1107px;top:385px;width:97px;height:64px;background:#b7dee8"></div>
<div style="left:1204px;top:385px;width:119px;height:64px;background:#b7dee8"></div>
<div style="left:1323px;top:385px;width:97px;height:64px;background:#b7dee8"></div>
<div style="left:1420px;top:385px;width:97px;height:64px;background:#b7dee8"></div>
<div style="left:1517px;top:385px;width:97px;height:64px;background:#b7dee8"></div>
<div style="left:1614px;top:385px;width:97px;height:64px;background:#b7dee8"></div>
<div style="left:1711px;top:385px;width:97px;height:64px;background:#b7dee8"></div>
<div style="left:1808px;top:385px;width:90px;height:64px;background:#b7dee8"></div>
<div style="left:198px;top:385px;width:220px;height:64px;background:#fff"></div>
<div style="left:199px;top:450px;width:219px;height:20px;background:#fff"></div>
<div style="left:419px;top:450px;width:63px;height:20px;background:#fff"></div>
<div style="left:483px;top:450px;width:63px;height:20px;background:#fff"></div>
<div style="left:547px;top:450px;width:63px;height:20px;background:#fff"></div>
<div style="left:611px;top:450px;width:130px;height:20px;background:#fff"></div>
<div style="left:742px;top:450px;width:63px;height:20px;background:#fff"></div>
<div style="left:806px;top:450px;width:63px;height:20px;background:#fff"></div>
<div style="left:870px;top:450px;width:140px;height:20px;background:#fff"></div>
<div style="left:1011px;top:450px;width:96px;height:20px;background:#ffc000"></div>
<div style="left:1108px;top:450px;width:96px;height:20px;background:#fff"></div>
<div style="left:1205px;top:450px;width:118px;height:20px;background:#fff"></div>
<div style="left:1324px;top:450px;width:96px;height:20px;background:#fff"></div>
<div style="left:1421px;top:450px;width:96px;height:20px;background:#ffc000"></div>
<div style="left:1518px;top:450px;width:96px;height:20px;background:#fff"></div>
<div style="left:1615px;top:450px;width:96px;height:20px;background:#fff"></div>
<div style="left:1712px;top:450px;width:96px;height:20px;background:#fff"></div>
<div style="left:1809px;top:450px;width:89px;height:20px;background:#ffc000"></div>
<div style="left:199px;top:471px;width:219px;height:20px;background:#fff"></div>
<div style="left:419px;top:471px;width:63px;height:20px;background:#fff"></div>
<div style="left:483px;top:471px;width:63px;height:20px;background:#fff"></div>
<div style="left:547px;top:471px;width:63px;height:20px;background:#fff"></div>
<div style="left:611px;top:471px;width:130px;height:20px;background:#fff"></div>
<div style="left:742px;top:471px;width:63px;height:20px;background:#fff"></div>
<div style="left:806px;top:471px;width:63px;height:20px;background:#fff"></div>
<div style="left:870px;top:471px;width:140px;height:20px;background:#fff"></div>
<div style="left:1011px;top:471px;width:96px;height:20px;background:#ffc000"></div>
<div style="left:1108px;top:471px;width:96px;height:20px;background:#fff"></div>
<div style="left:1205px;top:471px;width:118px;height:20px;background:#fff"></div>
<div style="left:1324px;top:471px;width:96px;height:20px;background:#fff"></div>
<div style="left:1421px;top:471px;width:96px;height:20px;background:#ffc000"></div>
<div style="left:1518px;top:471px;width:96px;height:20px;background:#fff"></div>
<div style="left:1615px;top:471px;width:96px;height:20px;background:#fff"></div>
<div style="left:1712px;top:471px;width:96px;height:20px;background:#fff"></div>
<div style="left:1809px;top:471px;width:89px;height:20px;background:#ffc000"></div>
<div style="left:199px;top:492px;width:219px;height:20px;background:#fff"></div>
<div style="left:419px;top:492px;width:63px;height:20px;background:#fff"></div>
<div style="left:483px;top:492px;width:63px;height:20px;background:#fff"></div>
<div style="left:547px;top:492px;width:63px;height:20px;background:#fff"></div>
<div style="left:611px;top:492px;width:130px;height:20px;background:#fff"></div>
<div style="left:742px;top:492px;width:63px;height:20px;background:#fff"></div>
<div style="left:806px;top:492px;width:63px;height:20px;background:#fff"></div>
<div style="left:870px;top:492px;width:140px;height:20px;background:#fff"></div>
<div style="left:1011px;top:492px;width:96px;height:20px;background:#ffc000"></div>
<div style="left:1108px;top:492px;width:96px;height:20px;background:#fff"></div>
<div style="left:1205px;top:492px;width:118px;height:20px;background:#fff"></div>
<div style="left:1324px;top:492px;width:96px;height:20px;background:#fff"></div>
<div style="left:1421px;top:492px;width:96px;height:20px;background:#ffc000"></div>
<div style="left:1518px;top:492px;width:96px;height:20px;background:#fff"></div>
<div style="left:1615px;top:492px;width:96px;height:20px;background:#fff"></div>
<div style="left:1712px;top:492px;width:96px;height:20px;background:#fff"></div>
<div style="left:1809px;top:492px;width:89px;height:20px;background:#ffc000"></div>
<div style="left:199px;top:513px;width:219px;height:16px;background:#fff"></div>
<div style="left:419px;top:513px;width:63px;height:16px;background:#fff"></div>
<div style="left:483px;top:513px;width:63px;height:16px;background:#fff"></div>
<div style="left:547px;top:513px;width:63px;height:16px;background:#fff"></div>
<div style="left:611px;top:513px;width:130px;height:16px;background:#fff"></div>
<div style="left:742px;top:513px;width:63px;height:16px;background:#fff"></div>
<div style="left:806px;top:513px;width:63px;height:16px;background:#fff"></div>
<div style="left:870px;top:513px;width:140px;height:16px;background:#fff"></div>
<div style="left:1011px;top:513px;width:96px;height:16px;background:#ffc000"></div>
<div style="left:1108px;top:513px;width:96px;height:16px;background:#fff"></div>
<div style="left:1205px;top:513px;width:118px;height:16px;background:#fff"></div>
<div style="left:1324px;top:513px;width:96px;height:16px;background:#fff"></div>
<div style="left:1421px;top:513px;width:96px;height:16px;background:#ffc000"></div>
<div style="left:1518px;top:513px;width:96px;height:16px;background:#fff"></div>
<div style="left:1615px;top:513px;width:96px;height:16px;background:#fff"></div>
<div style="left:1712px;top:513px;width:96px;height:16px;background:#fff"></div>
<div style="left:1809px;top:513px;width:89px;height:16px;background:#ffc000"></div>
<div style="left:199px;top:530px;width:219px;height:20px;background:#fff"></div>
<div style="left:419px;top:530px;width:63px;height:20px;background:#fff"></div>
<div style="left:483px;top:530px;width:63px;height:20px;background:#fff"></div>
<div style="left:547px;top:530px;width:63px;height:20px;background:#fff"></div>
<div style="left:611px;top:530px;width:130px;height:20px;background:#fff"></div>
<div style="left:742px;top:530px;width:63px;height:20px;background:#fff"></div>
<div style="left:806px;top:530px;width:63px;height:20px;background:#fff"></div>
<div style="left:870px;top:530px;width:140px;height:20px;background:#fff"></div>
<div style="left:1011px;top:530px;width:96px;height:20px;background:#ffc000"></div>
<div style="left:1108px;top:530px;width:96px;height:20px;background:#fff"></div>
<div style="left:1205px;top:530px;width:118px;height:20px;background:#fff"></div>
<div style="left:1324px;top:530px;width:96px;height:20px;background:#fff"></div>
<div style="left:1421px;top:530px;width:96px;height:20px;background:#ffc000"></div>
<div style="left:1518px;top:530px;width:96px;height:20px;background:#fff"></div>
<div style="left:1615px;top:530px;width:96px;height:20px;background:#fff"></div>
<div style="left:1712px;top:530px;width:96px;height:20px;background:#fff"></div>
<div style="left:1809px;top:530px;width:89px;height:20px;background:#ffc000"></div>
<div style="left:199px;top:551px;width:219px;height:20px;background:#fff"></div>
<div style="left:419px;top:551px;width:63px;height:20px;background:#fff"></div>
<div style="left:483px;top:551px;width:63px;height:20px;background:#fff"></div>
<div style="left:547px;top:551px;width:63px;height:20px;background:#fff"></div>
<div style="left:611px;top:551px;width:130px;height:20px;background:#fff"></div>
<div style="left:742px;top:551px;width:63px;height:20px;background:#fff"></div>
<div style="left:806px;top:551px;width:63px;height:20px;background:#fff"></div>
<div style="left:870px;top:551px;width:140px;height:20px;background:#fff"></div>
<div style="left:1011px;top:551px;width:96px;height:20px;background:#ffc000"></div>
<div style="left:1108px;top:551px;width:96px;height:20px;background:#fff"></div>
<div style="left:1205px;top:551px;width:118px;height:20px;background:#fff"></div>
<div style="left:1324px;top:551px;width:96px;height:20px;background:#fff"></div>
<div style="left:1421px;top:551px;width:96px;height:20px;background:#ffc000"></div>
<div style="left:1518px;top:551px;width:96px;height:20px;background:#fff"></div>
<div style="left:1615px;top:551px;width:96px;height:20px;background:#fff"></div>
<div style="left:1712px;top:551px;width:96px;height:20px;background:#fff"></div>
<div style="left:1809px;top:551px;width:89px;height:20px;background:#ffc000"></div>
<div style="left:199px;top:572px;width:219px;height:16px;background:#fff"></div>
<div style="left:419px;top:572px;width:63px;height:16px;background:#fff"></div>
<div style="left:483px;top:572px;width:63px;height:16px;background:#fff"></div>
<div style="left:547px;top:572px;width:63px;height:16px;background:#fff"></div>
<div style="left:611px;top:572px;width:130px;height:16px;background:#fff"></div>
<div style="left:742px;top:572px;width:63px;height:16px;background:#fff"></div>
<div style="left:806px;top:572px;width:63px;height:16px;background:#fff"></div>
<div style="left:870px;top:572px;width:140px;height:16px;background:#fff"></div>
<div style="left:1011px;top:572px;width:96px;height:16px;background:#ffc000"></div>
<div style="left:1108px;top:572px;width:96px;height:16px;background:#fff"></div>
<div style="left:1205px;top:572px;width:118px;height:16px;background:#fff"></div>
<div style="left:1324px;top:572px;width:96px;height:16px;background:#fff"></div>
<div style="left:1421px;top:572px;width:96px;height:16px;background:#ffc000"></div>
<div style="left:1518px;top:572px;width:96px;height:16px;background:#fff"></div>
<div style="left:1615px;top:572px;width:96px;height:16px;background:#fff"></div>
<div style="left:1712px;top:572px;width:96px;height:16px;background:#fff"></div>
<div style="left:1809px;top:572px;width:89px;height:16px;background:#ffc000"></div>
<div style="left:199px;top:589px;width:219px;height:16px;background:#fff"></div>
<div style="left:419px;top:589px;width:63px;height:16px;background:#fff"></div>
<div style="left:483px;top:589px;width:63px;height:16px;background:#fff"></div>
<div style="left:547px;top:589px;width:63px;height:16px;background:#fff"></div>
<div style="left:611px;top:589px;width:130px;height:16px;background:#fff"></div>
<div style="left:742px;top:589px;width:63px;height:16px;background:#fff"></div>
<div style="left:806px;top:589px;width:63px;height:16px;background:#fff"></div>
<div style="left:870px;top:589px;width:140px;height:16px;background:#fff"></div>
<div style="left:1011px;top:589px;width:96px;height:16px;background:#ffc000"></div>
<div style="left:1108px;top:589px;width:96px;height:16px;background:#fff"></div>
<div style="left:1205px;top:589px;width:118px;height:16px;background:#fff"></div>
<div style="left:1324px;top:589px;width:96px;height:16px;background:#fff"></div>
<div style="left:1421px;top:589px;width:96px;height:16px;background:#ffc000"></div>
<div style="left:1518px;top:589px;width:96px;height:16px;background:#fff"></div>
<div style="left:1615px;top:589px;width:96px;height:16px;background:#fff"></div>
<div style="left:1712px;top:589px;width:96px;height:16px;background:#fff"></div>
<div style="left:1809px;top:589px;width:89px;height:16px;background:#ffc000"></div>
<div style="left:199px;top:606px;width:219px;height:20px;background:#fff"></div>
<div style="left:419px;top:606px;width:63px;height:20px;background:#fff"></div>
<div style="left:483px;top:606px;width:63px;height:20px;background:#fff"></div>
<div style="left:547px;top:606px;width:63px;height:20px;background:#fff"></div>
<div style="left:611px;top:606px;width:130px;height:20px;background:#fff"></div>
<div style="left:742px;top:606px;width:63px;height:20px;background:#fff"></div>
<div style="left:806px;top:606px;width:63px;height:20px;background:#fff"></div>
<div style="left:870px;top:606px;width:140px;height:20px;background:#fff"></div>
<div style="left:1011px;top:606px;width:96px;height:20px;background:#fff"></div>
<div style="left:1108px;top:606px;width:96px;height:20px;background:#fff"></div>
<div style="left:1205px;top:606px;width:118px;height:20px;background:#fff"></div>
<div style="left:1324px;top:606px;width:96px;height:20px;background:#fff"></div>
<div style="left:1421px;top:606px;width:96px;height:20px;background:#fff"></div>
<div style="left:1518px;top:606px;width:96px;height:20px;background:#fff"></div>
<div style="left:1615px;top:606px;width:96px;height:20px;background:#fff"></div>
<div style="left:1712px;top:606px;width:96px;height:20px;background:#fff"></div>
<div style="left:1809px;top:606px;width:89px;height:20px;background:#fff"></div>
<div style="left:198px;top:385px;width:671px;height:1px;background:#000"></div>
<div style="left:869px;top:385px;width:1029px;height:1px;background:#000"></div>
<div style="left:198px;top:449px;width:671px;height:1px;background:#000"></div>
<div style="left:869px;top:449px;width:1029px;height:1px;background:#000"></div>
<div style="left:198px;top:470px;width:671px;height:1px;background:#000"></div>
<div style="left:869px;top:470px;width:1029px;height:1px;background:#000"></div>
<div style="left:198px;top:491px;width:671px;height:1px;background:#000"></div>
<div style="left:869px;top:491px;width:1029px;height:1px;background:#000"></div>
<div style="left:198px;top:512px;width:671px;height:1px;background:#000"></div>
<div style="left:869px;top:512px;width:1029px;height:1px;background:#000"></div>
<div style="left:198px;top:529px;width:671px;height:1px;background:#000"></div>
<div style="left:869px;top:529px;width:1029px;height:1px;background:#000"></div>
<div style="left:198px;top:550px;width:671px;height:1px;background:#000"></div>
<div style="left:869px;top:550px;width:1029px;height:1px;background:#000"></div>
<div style="left:198px;top:571px;width:671px;height:1px;background:#000"></div>
<div style="left:869px;top:571px;width:1029px;height:1px;background:#000"></div>
<div style="left:198px;top:588px;width:671px;height:1px;background:#000"></div>
<div style="left:869px;top:588px;width:1029px;height:1px;background:#000"></div>
<div style="left:198px;top:605px;width:671px;height:1px;background:#000"></div>
<div style="left:869px;top:605px;width:1029px;height:1px;background:#000"></div>
<div style="left:198px;top:626px;width:671px;height:1px;background:#000"></div>
<div style="left:869px;top:626px;width:1029px;height:1px;background:#000"></div>
<div style="left:198px;top:385px;width:1px;height:242px;background:#000"></div>
<div style="left:418px;top:385px;width:1px;height:242px;background:#000"></div>
<div style="left:482px;top:385px;width:1px;height:242px;background:#000"></div>
<div style="left:546px;top:385px;width:1px;height:242px;background:#000"></div>
<div style="left:610px;top:385px;width:1px;height:242px;background:#000"></div>
<div style="left:741px;top:385px;width:1px;height:242px;background:#000"></div>
<div style="left:805px;top:385px;width:1px;height:242px;background:#000"></div>
<div style="left:869px;top:385px;width:1px;height:242px;background:#000"></div>
<div style="left:1010px;top:385px;width:1px;height:242px;background:#000"></div>
<div style="left:1107px;top:385px;width:1px;height:242px;background:#000"></div>
<div style="left:1204px;top:385px;width:1px;height:242px;background:#000"></div>
<div style="left:1323px;top:385px;width:1px;height:242px;background:#000"></div>
<div style="left:1420px;top:385px;width:1px;height:242px;background:#000"></div>
<div style="left:1517px;top:385px;width:1px;height:242px;background:#000"></div>
<div style="left:1614px;top:385px;width:1px;height:242px;background:#000"></div>
<div style="left:1711px;top:385px;width:1px;height:242px;background:#000"></div>
<div style="left:1808px;top:385px;width:1px;height:242px;background:#000"></div>
<div style="left:869px;top:275px;width:1px;height:703px;background:#7a7a7a"></div>
<div style="left:869px;top:385px;width:1px;height:242px;background:#000"></div>
<div style="left:-133.20px;top:454.80px;font-size:13px;line-height:13px;color:#000;font-weight:normal;white-space:pre;width:600px;text-align:center;">36</div>
<div style="left:201.00px;top:454.80px;font-size:13px;line-height:13px;color:#000;font-weight:normal;white-space:pre;">Agis Mardiana</div>
<div style="left:80.00px;top:454.80px;font-size:13px;line-height:13px;color:#000;font-weight:normal;white-space:pre;width:400px;text-align:right;">6</div>
<div style="left:144.00px;top:454.80px;font-size:13px;line-height:13px;color:#000;font-weight:normal;white-space:pre;width:400px;text-align:right;">12</div>
<div style="left:208.00px;top:454.80px;font-size:13px;line-height:13px;color:#000;font-weight:normal;white-space:pre;width:400px;text-align:right;">7</div>
<div style="left:613.00px;top:454.80px;font-size:13px;line-height:13px;color:#000;font-weight:normal;white-space:pre;transform:scaleX(0.96);transform-origin:0 0;">3207091505990003</div>
<div style="left:744.00px;top:454.80px;font-size:13px;line-height:13px;color:#000;font-weight:normal;white-space:pre;">TMI</div>
<div style="left:808.00px;top:454.80px;font-size:13px;line-height:13px;color:#000;font-weight:normal;white-space:pre;">TK/0</div>
<div style="left:603.10px;top:455.11px;font-size:11.8px;line-height:11.8px;color:#000;font-weight:bold;white-space:pre;width:400px;text-align:right;transform:scaleX(1.1);transform-origin:100% 0;">4.483.000,00</div>
<div style="left:689.50px;top:455.11px;font-size:11.8px;line-height:11.8px;color:#000;font-weight:bold;white-space:pre;width:400px;text-align:right;transform:scaleX(1.1);transform-origin:100% 0;">-</div>
<div style="left:798.10px;top:455.11px;font-size:11.8px;line-height:11.8px;color:#000;font-weight:bold;white-space:pre;width:400px;text-align:right;transform:scaleX(1.1);transform-origin:100% 0;">203.524,30</div>
<div style="left:916.70px;top:454.80px;font-size:13px;line-height:13px;color:#000;font-weight:normal;white-space:pre;width:400px;text-align:right;">4.686.524,30</div>
<div style="left:1000.00px;top:454.80px;font-size:13px;line-height:13px;color:#000;font-weight:normal;white-space:pre;width:400px;text-align:right;">-</div>
<div style="left:1099.50px;top:455.11px;font-size:11.8px;line-height:11.8px;color:#000;font-weight:bold;white-space:pre;width:400px;text-align:right;transform:scaleX(1.1);transform-origin:100% 0;">-</div>
<div style="left:1207.70px;top:454.80px;font-size:13px;line-height:13px;color:#000;font-weight:normal;white-space:pre;width:400px;text-align:right;">89.658,28</div>
<div style="left:1304.70px;top:454.80px;font-size:13px;line-height:13px;color:#000;font-weight:normal;white-space:pre;width:400px;text-align:right;">44.829,14</div>
<div style="left:1400.60px;top:455.11px;font-size:11.8px;line-height:11.8px;color:#000;font-weight:bold;white-space:pre;width:400px;text-align:right;transform:scaleX(1.1);transform-origin:100% 0;">4.483.000,00</div>
<div style="left:1498.60px;top:455.11px;font-size:11.8px;line-height:11.8px;color:#000;font-weight:bold;white-space:pre;width:400px;text-align:right;transform:scaleX(1.1);transform-origin:100% 0;">1.907.000,00</div>
<div style="left:-133.20px;top:475.80px;font-size:13px;line-height:13px;color:#000;font-weight:normal;white-space:pre;width:600px;text-align:center;">40</div>
<div style="left:201.00px;top:475.80px;font-size:13px;line-height:13px;color:#000;font-weight:normal;white-space:pre;">Fajar Rihadi</div>
<div style="left:80.00px;top:475.80px;font-size:13px;line-height:13px;color:#000;font-weight:normal;white-space:pre;width:400px;text-align:right;">5</div>
<div style="left:144.00px;top:475.80px;font-size:13px;line-height:13px;color:#000;font-weight:normal;white-space:pre;width:400px;text-align:right;">12</div>
<div style="left:208.00px;top:475.80px;font-size:13px;line-height:13px;color:#000;font-weight:normal;white-space:pre;width:400px;text-align:right;">8</div>
<div style="left:613.00px;top:475.80px;font-size:13px;line-height:13px;color:#000;font-weight:normal;white-space:pre;transform:scaleX(0.96);transform-origin:0 0;">3671110208810005</div>
<div style="left:744.00px;top:475.80px;font-size:13px;line-height:13px;color:#000;font-weight:normal;white-space:pre;">TMI</div>
<div style="left:808.00px;top:475.80px;font-size:13px;line-height:13px;color:#000;font-weight:normal;white-space:pre;">K/1</div>
<div style="left:603.10px;top:476.11px;font-size:11.8px;line-height:11.8px;color:#000;font-weight:bold;white-space:pre;width:400px;text-align:right;transform:scaleX(1.1);transform-origin:100% 0;">4.902.000,00</div>
<div style="left:689.50px;top:476.11px;font-size:11.8px;line-height:11.8px;color:#000;font-weight:bold;white-space:pre;width:400px;text-align:right;transform:scaleX(1.1);transform-origin:100% 0;">-</div>
<div style="left:798.10px;top:476.11px;font-size:11.8px;line-height:11.8px;color:#000;font-weight:bold;white-space:pre;width:400px;text-align:right;transform:scaleX(1.1);transform-origin:100% 0;">222.510,71</div>
<div style="left:916.70px;top:475.80px;font-size:13px;line-height:13px;color:#000;font-weight:normal;white-space:pre;width:400px;text-align:right;">5.124.510,71</div>
<div style="left:1000.00px;top:475.80px;font-size:13px;line-height:13px;color:#000;font-weight:normal;white-space:pre;width:400px;text-align:right;">-</div>
<div style="left:1099.50px;top:476.11px;font-size:11.8px;line-height:11.8px;color:#000;font-weight:bold;white-space:pre;width:400px;text-align:right;transform:scaleX(1.1);transform-origin:100% 0;">-</div>
<div style="left:1207.70px;top:475.80px;font-size:13px;line-height:13px;color:#000;font-weight:normal;white-space:pre;width:400px;text-align:right;">98.022,34</div>
<div style="left:1304.70px;top:475.80px;font-size:13px;line-height:13px;color:#000;font-weight:normal;white-space:pre;width:400px;text-align:right;">49.011,17</div>
<div style="left:1400.60px;top:476.11px;font-size:11.8px;line-height:11.8px;color:#000;font-weight:bold;white-space:pre;width:400px;text-align:right;transform:scaleX(1.1);transform-origin:100% 0;">4.902.000,00</div>
<div style="left:1498.60px;top:476.11px;font-size:11.8px;line-height:11.8px;color:#000;font-weight:bold;white-space:pre;width:400px;text-align:right;transform:scaleX(1.1);transform-origin:100% 0;">2.930.000,00</div>
<div style="left:-133.20px;top:496.80px;font-size:13px;line-height:13px;color:#000;font-weight:normal;white-space:pre;width:600px;text-align:center;">42</div>
<div style="left:201.00px;top:496.80px;font-size:13px;line-height:13px;color:#000;font-weight:normal;white-space:pre;">Ahmad Zulfikri</div>
<div style="left:80.00px;top:496.80px;font-size:13px;line-height:13px;color:#000;font-weight:normal;white-space:pre;width:400px;text-align:right;">5</div>
<div style="left:144.00px;top:496.80px;font-size:13px;line-height:13px;color:#000;font-weight:normal;white-space:pre;width:400px;text-align:right;">12</div>
<div style="left:208.00px;top:496.80px;font-size:13px;line-height:13px;color:#000;font-weight:normal;white-space:pre;width:400px;text-align:right;">8</div>
<div style="left:613.00px;top:496.80px;font-size:13px;line-height:13px;color:#000;font-weight:normal;white-space:pre;transform:scaleX(0.96);transform-origin:0 0;">1312060205990001</div>
<div style="left:744.00px;top:496.80px;font-size:13px;line-height:13px;color:#000;font-weight:normal;white-space:pre;">TMI</div>
<div style="left:808.00px;top:496.80px;font-size:13px;line-height:13px;color:#000;font-weight:normal;white-space:pre;">TK/0</div>
<div style="left:603.10px;top:497.11px;font-size:11.8px;line-height:11.8px;color:#000;font-weight:bold;white-space:pre;width:400px;text-align:right;transform:scaleX(1.1);transform-origin:100% 0;">5.127.000,00</div>
<div style="left:689.50px;top:497.11px;font-size:11.8px;line-height:11.8px;color:#000;font-weight:bold;white-space:pre;width:400px;text-align:right;transform:scaleX(1.1);transform-origin:100% 0;">-</div>
<div style="left:798.10px;top:497.11px;font-size:11.8px;line-height:11.8px;color:#000;font-weight:bold;white-space:pre;width:400px;text-align:right;transform:scaleX(1.1);transform-origin:100% 0;">232.761,12</div>
<div style="left:916.70px;top:496.80px;font-size:13px;line-height:13px;color:#000;font-weight:normal;white-space:pre;width:400px;text-align:right;">5.359.761,12</div>
<div style="left:1000.00px;top:496.80px;font-size:13px;line-height:13px;color:#000;font-weight:normal;white-space:pre;width:400px;text-align:right;">-</div>
<div style="left:1099.50px;top:497.11px;font-size:11.8px;line-height:11.8px;color:#000;font-weight:bold;white-space:pre;width:400px;text-align:right;transform:scaleX(1.1);transform-origin:100% 0;">-</div>
<div style="left:1207.70px;top:496.80px;font-size:13px;line-height:13px;color:#000;font-weight:normal;white-space:pre;width:400px;text-align:right;">102.537,94</div>
<div style="left:1304.70px;top:496.80px;font-size:13px;line-height:13px;color:#000;font-weight:normal;white-space:pre;width:400px;text-align:right;">51.268,97</div>
<div style="left:1384.00px;top:497.11px;font-size:11.8px;line-height:11.8px;color:#000;font-weight:bold;white-space:pre;width:400px;text-align:right;transform:scaleX(1.1);transform-origin:100% 0;">-</div>
<div style="left:1498.60px;top:497.11px;font-size:11.8px;line-height:11.8px;color:#000;font-weight:bold;white-space:pre;width:400px;text-align:right;transform:scaleX(1.1);transform-origin:100% 0;">1.196.375,00</div>
<div style="left:-133.20px;top:514.50px;font-size:13px;line-height:13px;color:#000;font-weight:normal;white-space:pre;width:600px;text-align:center;">43</div>
<div style="left:201.00px;top:514.50px;font-size:13px;line-height:13px;color:#000;font-weight:normal;white-space:pre;">Dian Candra</div>
<div style="left:80.00px;top:514.50px;font-size:13px;line-height:13px;color:#000;font-weight:normal;white-space:pre;width:400px;text-align:right;">1</div>
<div style="left:144.00px;top:514.50px;font-size:13px;line-height:13px;color:#000;font-weight:normal;white-space:pre;width:400px;text-align:right;">12</div>
<div style="left:208.00px;top:514.50px;font-size:13px;line-height:13px;color:#000;font-weight:normal;white-space:pre;width:400px;text-align:right;">12</div>
<div style="left:613.00px;top:514.50px;font-size:13px;line-height:13px;color:#000;font-weight:normal;white-space:pre;transform:scaleX(0.96);transform-origin:0 0;">3201102805850006</div>
<div style="left:744.00px;top:514.50px;font-size:13px;line-height:13px;color:#000;font-weight:normal;white-space:pre;">TMI</div>
<div style="left:808.00px;top:514.50px;font-size:13px;line-height:13px;color:#000;font-weight:normal;white-space:pre;">K/1</div>
<div style="left:603.10px;top:515.01px;font-size:11.8px;line-height:11.8px;color:#000;font-weight:bold;white-space:pre;width:400px;text-align:right;transform:scaleX(1.1);transform-origin:100% 0;">5.127.000,00</div>
<div style="left:689.50px;top:515.01px;font-size:11.8px;line-height:11.8px;color:#000;font-weight:bold;white-space:pre;width:400px;text-align:right;transform:scaleX(1.1);transform-origin:100% 0;">-</div>
<div style="left:798.10px;top:515.01px;font-size:11.8px;line-height:11.8px;color:#000;font-weight:bold;white-space:pre;width:400px;text-align:right;transform:scaleX(1.1);transform-origin:100% 0;">27.685,24</div>
<div style="left:916.70px;top:514.50px;font-size:13px;line-height:13px;color:#000;font-weight:normal;white-space:pre;width:400px;text-align:right;">5.154.685,24</div>
<div style="left:1000.00px;top:514.50px;font-size:13px;line-height:13px;color:#000;font-weight:normal;white-space:pre;width:400px;text-align:right;">-</div>
<div style="left:1207.70px;top:514.50px;font-size:13px;line-height:13px;color:#000;font-weight:normal;white-space:pre;width:400px;text-align:right;">102.537,94</div>
<div style="left:1304.70px;top:514.50px;font-size:13px;line-height:13px;color:#000;font-weight:normal;white-space:pre;width:400px;text-align:right;">51.268,97</div>
<div style="left:1400.60px;top:515.01px;font-size:11.8px;line-height:11.8px;color:#000;font-weight:bold;white-space:pre;width:400px;text-align:right;transform:scaleX(1.1);transform-origin:100% 0;">5.127.000,00</div>
<div style="left:1498.60px;top:515.01px;font-size:11.8px;line-height:11.8px;color:#000;font-weight:bold;white-space:pre;width:400px;text-align:right;transform:scaleX(1.1);transform-origin:100% 0;">600.000,00</div>
<div style="left:-133.20px;top:534.80px;font-size:13px;line-height:13px;color:#000;font-weight:normal;white-space:pre;width:600px;text-align:center;">46</div>
<div style="left:201.00px;top:534.80px;font-size:13px;line-height:13px;color:#000;font-weight:normal;white-space:pre;">Taufiq Nur Badrussalam</div>
<div style="left:80.00px;top:534.80px;font-size:13px;line-height:13px;color:#000;font-weight:normal;white-space:pre;width:400px;text-align:right;">5</div>
<div style="left:144.00px;top:534.80px;font-size:13px;line-height:13px;color:#000;font-weight:normal;white-space:pre;width:400px;text-align:right;">12</div>
<div style="left:208.00px;top:534.80px;font-size:13px;line-height:13px;color:#000;font-weight:normal;white-space:pre;width:400px;text-align:right;">8</div>
<div style="left:613.00px;top:534.80px;font-size:13px;line-height:13px;color:#000;font-weight:normal;white-space:pre;transform:scaleX(0.96);transform-origin:0 0;">3329012504010003</div>
<div style="left:744.00px;top:534.80px;font-size:13px;line-height:13px;color:#000;font-weight:normal;white-space:pre;">TMI</div>
<div style="left:808.00px;top:534.80px;font-size:13px;line-height:13px;color:#000;font-weight:normal;white-space:pre;">TK/0</div>
<div style="left:603.10px;top:535.11px;font-size:11.8px;line-height:11.8px;color:#000;font-weight:bold;white-space:pre;width:400px;text-align:right;transform:scaleX(1.1);transform-origin:100% 0;">5.397.000,00</div>
<div style="left:689.50px;top:535.11px;font-size:11.8px;line-height:11.8px;color:#000;font-weight:bold;white-space:pre;width:400px;text-align:right;transform:scaleX(1.1);transform-origin:100% 0;">-</div>
<div style="left:798.10px;top:535.11px;font-size:11.8px;line-height:11.8px;color:#000;font-weight:bold;white-space:pre;width:400px;text-align:right;transform:scaleX(1.1);transform-origin:100% 0;">29.142,51</div>
<div style="left:916.70px;top:534.80px;font-size:13px;line-height:13px;color:#000;font-weight:normal;white-space:pre;width:400px;text-align:right;">5.426.142,51</div>
<div style="left:1000.00px;top:534.80px;font-size:13px;line-height:13px;color:#000;font-weight:normal;white-space:pre;width:400px;text-align:right;">-</div>
<div style="left:1108.60px;top:535.11px;font-size:11.8px;line-height:11.8px;color:#000;font-weight:bold;white-space:pre;width:400px;text-align:right;transform:scaleX(1.1);transform-origin:100% 0;">13.565,00</div>
<div style="left:1207.70px;top:534.80px;font-size:13px;line-height:13px;color:#000;font-weight:normal;white-space:pre;width:400px;text-align:right;">107.935,22</div>
<div style="left:1304.70px;top:534.80px;font-size:13px;line-height:13px;color:#000;font-weight:normal;white-space:pre;width:400px;text-align:right;">53.967,61</div>
<div style="left:1400.60px;top:535.11px;font-size:11.8px;line-height:11.8px;color:#000;font-weight:bold;white-space:pre;width:400px;text-align:right;transform:scaleX(1.1);transform-origin:100% 0;">5.397.000,00</div>
<div style="left:1498.60px;top:535.11px;font-size:11.8px;line-height:11.8px;color:#000;font-weight:bold;white-space:pre;width:400px;text-align:right;transform:scaleX(1.1);transform-origin:100% 0;">2.382.125,00</div>
<div style="left:-133.20px;top:555.80px;font-size:13px;line-height:13px;color:#000;font-weight:normal;white-space:pre;width:600px;text-align:center;">48</div>
<div style="left:201.00px;top:555.80px;font-size:13px;line-height:13px;color:#000;font-weight:normal;white-space:pre;">Heri Azhar Ramdhoni</div>
<div style="left:80.00px;top:555.80px;font-size:13px;line-height:13px;color:#000;font-weight:normal;white-space:pre;width:400px;text-align:right;">6</div>
<div style="left:144.00px;top:555.80px;font-size:13px;line-height:13px;color:#000;font-weight:normal;white-space:pre;width:400px;text-align:right;">12</div>
<div style="left:208.00px;top:555.80px;font-size:13px;line-height:13px;color:#000;font-weight:normal;white-space:pre;width:400px;text-align:right;">7</div>
<div style="left:613.00px;top:555.80px;font-size:13px;line-height:13px;color:#000;font-weight:normal;white-space:pre;transform:scaleX(0.96);transform-origin:0 0;">3215081303920009</div>
<div style="left:744.00px;top:555.80px;font-size:13px;line-height:13px;color:#000;font-weight:normal;white-space:pre;">TMI</div>
<div style="left:808.00px;top:555.80px;font-size:13px;line-height:13px;color:#000;font-weight:normal;white-space:pre;">K/1</div>
<div style="left:603.10px;top:556.11px;font-size:11.8px;line-height:11.8px;color:#000;font-weight:bold;white-space:pre;width:400px;text-align:right;transform:scaleX(1.1);transform-origin:100% 0;">5.397.000,00</div>
<div style="left:689.50px;top:556.11px;font-size:11.8px;line-height:11.8px;color:#000;font-weight:bold;white-space:pre;width:400px;text-align:right;transform:scaleX(1.1);transform-origin:100% 0;">-</div>
<div style="left:798.10px;top:556.11px;font-size:11.8px;line-height:11.8px;color:#000;font-weight:bold;white-space:pre;width:400px;text-align:right;transform:scaleX(1.1);transform-origin:100% 0;">245.012,95</div>
<div style="left:916.70px;top:555.80px;font-size:13px;line-height:13px;color:#000;font-weight:normal;white-space:pre;width:400px;text-align:right;">5.642.012,95</div>
<div style="left:1000.00px;top:555.80px;font-size:13px;line-height:13px;color:#000;font-weight:normal;white-space:pre;width:400px;text-align:right;">-</div>
<div style="left:1108.60px;top:556.11px;font-size:11.8px;line-height:11.8px;color:#000;font-weight:bold;white-space:pre;width:400px;text-align:right;transform:scaleX(1.1);transform-origin:100% 0;">51.956,35</div>
<div style="left:1207.70px;top:555.80px;font-size:13px;line-height:13px;color:#000;font-weight:normal;white-space:pre;width:400px;text-align:right;">107.935,22</div>
<div style="left:1304.70px;top:555.80px;font-size:13px;line-height:13px;color:#000;font-weight:normal;white-space:pre;width:400px;text-align:right;">53.967,61</div>
<div style="left:1384.00px;top:556.11px;font-size:11.8px;line-height:11.8px;color:#000;font-weight:bold;white-space:pre;width:400px;text-align:right;transform:scaleX(1.1);transform-origin:100% 0;">-</div>
<div style="left:1498.60px;top:556.11px;font-size:11.8px;line-height:11.8px;color:#000;font-weight:bold;white-space:pre;width:400px;text-align:right;transform:scaleX(1.1);transform-origin:100% 0;">1.425.500,00</div>
<div style="left:-133.20px;top:573.50px;font-size:13px;line-height:13px;color:#000;font-weight:normal;white-space:pre;width:600px;text-align:center;">49</div>
<div style="left:201.00px;top:573.50px;font-size:13px;line-height:13px;color:#000;font-weight:normal;white-space:pre;">Dodi Aris Setiawan</div>
<div style="left:80.00px;top:573.50px;font-size:13px;line-height:13px;color:#000;font-weight:normal;white-space:pre;width:400px;text-align:right;">5</div>
<div style="left:144.00px;top:573.50px;font-size:13px;line-height:13px;color:#000;font-weight:normal;white-space:pre;width:400px;text-align:right;">12</div>
<div style="left:208.00px;top:573.50px;font-size:13px;line-height:13px;color:#000;font-weight:normal;white-space:pre;width:400px;text-align:right;">8</div>
<div style="left:613.00px;top:573.50px;font-size:13px;line-height:13px;color:#000;font-weight:normal;white-space:pre;transform:scaleX(0.96);transform-origin:0 0;">3276061308930003</div>
<div style="left:744.00px;top:573.50px;font-size:13px;line-height:13px;color:#000;font-weight:normal;white-space:pre;">TMI</div>
<div style="left:808.00px;top:573.50px;font-size:13px;line-height:13px;color:#000;font-weight:normal;white-space:pre;">TK/0</div>
<div style="left:603.10px;top:574.01px;font-size:11.8px;line-height:11.8px;color:#000;font-weight:bold;white-space:pre;width:400px;text-align:right;transform:scaleX(1.1);transform-origin:100% 0;">5.397.000,00</div>
<div style="left:689.50px;top:574.01px;font-size:11.8px;line-height:11.8px;color:#000;font-weight:bold;white-space:pre;width:400px;text-align:right;transform:scaleX(1.1);transform-origin:100% 0;">-</div>
<div style="left:798.10px;top:574.01px;font-size:11.8px;line-height:11.8px;color:#000;font-weight:bold;white-space:pre;width:400px;text-align:right;transform:scaleX(1.1);transform-origin:100% 0;">29.142,51</div>
<div style="left:916.70px;top:573.50px;font-size:13px;line-height:13px;color:#000;font-weight:normal;white-space:pre;width:400px;text-align:right;">5.426.142,51</div>
<div style="left:1000.00px;top:573.50px;font-size:13px;line-height:13px;color:#000;font-weight:normal;white-space:pre;width:400px;text-align:right;">-</div>
<div style="left:1108.60px;top:574.01px;font-size:11.8px;line-height:11.8px;color:#000;font-weight:bold;white-space:pre;width:400px;text-align:right;transform:scaleX(1.1);transform-origin:100% 0;">65.661,43</div>
<div style="left:1207.70px;top:573.50px;font-size:13px;line-height:13px;color:#000;font-weight:normal;white-space:pre;width:400px;text-align:right;">107.935,22</div>
<div style="left:1304.70px;top:573.50px;font-size:13px;line-height:13px;color:#000;font-weight:normal;white-space:pre;width:400px;text-align:right;">53.967,61</div>
<div style="left:1384.00px;top:574.01px;font-size:11.8px;line-height:11.8px;color:#000;font-weight:bold;white-space:pre;width:400px;text-align:right;transform:scaleX(1.1);transform-origin:100% 0;">-</div>
<div style="left:1498.60px;top:574.01px;font-size:11.8px;line-height:11.8px;color:#000;font-weight:bold;white-space:pre;width:400px;text-align:right;transform:scaleX(1.1);transform-origin:100% 0;">4.089.000,00</div>
<div style="left:-133.20px;top:590.50px;font-size:13px;line-height:13px;color:#000;font-weight:normal;white-space:pre;width:600px;text-align:center;">51</div>
<div style="left:201.00px;top:590.50px;font-size:13px;line-height:13px;color:#000;font-weight:normal;white-space:pre;">Fahrezy Aldi Permana</div>
<div style="left:80.00px;top:590.50px;font-size:13px;line-height:13px;color:#000;font-weight:normal;white-space:pre;width:400px;text-align:right;">9</div>
<div style="left:144.00px;top:590.50px;font-size:13px;line-height:13px;color:#000;font-weight:normal;white-space:pre;width:400px;text-align:right;">12</div>
<div style="left:208.00px;top:590.50px;font-size:13px;line-height:13px;color:#000;font-weight:normal;white-space:pre;width:400px;text-align:right;">4</div>
<div style="left:613.00px;top:590.50px;font-size:13px;line-height:13px;color:#000;font-weight:normal;white-space:pre;transform:scaleX(0.96);transform-origin:0 0;">3276061008000002</div>
<div style="left:744.00px;top:590.50px;font-size:13px;line-height:13px;color:#000;font-weight:normal;white-space:pre;">TMI</div>
<div style="left:808.00px;top:590.50px;font-size:13px;line-height:13px;color:#000;font-weight:normal;white-space:pre;">TK/0</div>
<div style="left:603.10px;top:591.01px;font-size:11.8px;line-height:11.8px;color:#000;font-weight:bold;white-space:pre;width:400px;text-align:right;transform:scaleX(1.1);transform-origin:100% 0;">5.397.000,00</div>
<div style="left:689.50px;top:591.01px;font-size:11.8px;line-height:11.8px;color:#000;font-weight:bold;white-space:pre;width:400px;text-align:right;transform:scaleX(1.1);transform-origin:100% 0;">-</div>
<div style="left:798.10px;top:591.01px;font-size:11.8px;line-height:11.8px;color:#000;font-weight:bold;white-space:pre;width:400px;text-align:right;transform:scaleX(1.1);transform-origin:100% 0;">245.012,95</div>
<div style="left:916.70px;top:590.50px;font-size:13px;line-height:13px;color:#000;font-weight:normal;white-space:pre;width:400px;text-align:right;">5.642.012,95</div>
<div style="left:1000.00px;top:590.50px;font-size:13px;line-height:13px;color:#000;font-weight:normal;white-space:pre;width:400px;text-align:right;">-</div>
<div style="left:1108.60px;top:591.01px;font-size:11.8px;line-height:11.8px;color:#000;font-weight:bold;white-space:pre;width:400px;text-align:right;transform:scaleX(1.1);transform-origin:100% 0;">45.315,10</div>
<div style="left:1207.70px;top:590.50px;font-size:13px;line-height:13px;color:#000;font-weight:normal;white-space:pre;width:400px;text-align:right;">107.935,22</div>
<div style="left:1304.70px;top:590.50px;font-size:13px;line-height:13px;color:#000;font-weight:normal;white-space:pre;width:400px;text-align:right;">53.967,61</div>
<div style="left:1400.60px;top:591.01px;font-size:11.8px;line-height:11.8px;color:#000;font-weight:bold;white-space:pre;width:400px;text-align:right;transform:scaleX(1.1);transform-origin:100% 0;">5.397.000,00</div>
<div style="left:1498.60px;top:591.01px;font-size:11.8px;line-height:11.8px;color:#000;font-weight:bold;white-space:pre;width:400px;text-align:right;transform:scaleX(1.1);transform-origin:100% 0;">2.410.000,00</div>
<div style="left:-133.20px;top:610.80px;font-size:13px;line-height:13px;color:#000;font-weight:normal;white-space:pre;width:600px;text-align:center;">104</div>
<div style="left:201.00px;top:610.80px;font-size:13px;line-height:13px;color:#000;font-weight:normal;white-space:pre;">Yudha Manggala Alaondo</div>
<div style="left:80.00px;top:610.80px;font-size:13px;line-height:13px;color:#000;font-weight:normal;white-space:pre;width:400px;text-align:right;">1</div>
<div style="left:144.00px;top:610.80px;font-size:13px;line-height:13px;color:#000;font-weight:normal;white-space:pre;width:400px;text-align:right;">11</div>
<div style="left:208.00px;top:610.80px;font-size:13px;line-height:13px;color:#000;font-weight:normal;white-space:pre;width:400px;text-align:right;">11</div>
<div style="left:613.00px;top:610.80px;font-size:13px;line-height:13px;color:#000;font-weight:normal;white-space:pre;transform:scaleX(0.96);transform-origin:0 0;">3216053008960004</div>
<div style="left:744.00px;top:610.80px;font-size:13px;line-height:13px;color:#000;font-weight:normal;white-space:pre;">TMI</div>
<div style="left:808.00px;top:610.80px;font-size:13px;line-height:13px;color:#000;font-weight:normal;white-space:pre;">K/2</div>
<div style="left:603.10px;top:611.11px;font-size:11.8px;line-height:11.8px;color:#000;font-weight:bold;white-space:pre;width:400px;text-align:right;transform:scaleX(1.1);transform-origin:100% 0;">5.541.066,67</div>
<div style="left:700.80px;top:611.11px;font-size:11.8px;line-height:11.8px;color:#000;font-weight:bold;white-space:pre;width:400px;text-align:right;transform:scaleX(1.1);transform-origin:100% 0;">2.504.000,00</div>
<div style="left:798.10px;top:611.11px;font-size:11.8px;line-height:11.8px;color:#000;font-weight:bold;white-space:pre;width:400px;text-align:right;transform:scaleX(1.1);transform-origin:100% 0;">245.012,95</div>
<div style="left:916.70px;top:610.80px;font-size:13px;line-height:13px;color:#000;font-weight:normal;white-space:pre;width:400px;text-align:right;">8.290.079,62</div>
<div style="left:1000.00px;top:610.80px;font-size:13px;line-height:13px;color:#000;font-weight:normal;white-space:pre;width:400px;text-align:right;">-</div>
<div style="left:1108.60px;top:611.11px;font-size:11.8px;line-height:11.8px;color:#000;font-weight:bold;white-space:pre;width:400px;text-align:right;transform:scaleX(1.1);transform-origin:100% 0;">82.900,80</div>
<div style="left:1207.70px;top:610.80px;font-size:13px;line-height:13px;color:#000;font-weight:normal;white-space:pre;width:400px;text-align:right;">107.935,22</div>
<div style="left:1304.70px;top:610.80px;font-size:13px;line-height:13px;color:#000;font-weight:normal;white-space:pre;width:400px;text-align:right;">53.967,61</div>
<div style="left:604.00px;top:333.00px;font-size:13px;line-height:13px;color:#000;font-weight:normal;white-space:pre;width:400px;text-align:right;">46.768.066,67</div>
<div style="left:701.00px;top:333.00px;font-size:13px;line-height:13px;color:#000;font-weight:normal;white-space:pre;width:400px;text-align:right;">2.504.000,00</div>
<div style="left:798.00px;top:333.00px;font-size:13px;line-height:13px;color:#000;font-weight:normal;white-space:pre;width:400px;text-align:right;">1.479.805,24</div>
<div style="left:917.00px;top:333.00px;font-size:13px;line-height:13px;color:#000;font-weight:normal;white-space:pre;width:400px;text-align:right;">50.751.871,91</div>
<div style="left:1000.00px;top:333.00px;font-size:13px;line-height:13px;color:#000;font-weight:normal;white-space:pre;width:400px;text-align:right;">-</div>
<div style="left:1111.00px;top:333.00px;font-size:13px;line-height:13px;color:#000;font-weight:normal;white-space:pre;width:400px;text-align:right;">259.398,68</div>
<div style="left:1208.00px;top:333.00px;font-size:13px;line-height:13px;color:#000;font-weight:normal;white-space:pre;width:400px;text-align:right;">932.432,60</div>
<div style="left:1305.00px;top:333.00px;font-size:13px;line-height:13px;color:#000;font-weight:normal;white-space:pre;width:400px;text-align:right;">466.216,30</div>
<div style="left:1402.00px;top:333.00px;font-size:13px;line-height:13px;color:#000;font-weight:normal;white-space:pre;width:400px;text-align:right;">25.306.000,00</div>
<div style="left:1500.00px;top:333.00px;font-size:13px;line-height:13px;color:#000;font-weight:normal;white-space:pre;width:400px;text-align:right;">16.940.000,00</div>
<div style="left:991.00px;top:360.00px;font-size:13px;line-height:13px;color:#000;font-weight:normal;white-space:pre;width:600px;text-align:center;">OKT</div>
<div style="left:-133.00px;top:434.00px;font-size:13px;line-height:13px;color:#000;font-weight:normal;white-space:pre;width:600px;text-align:center;">1</div>
<div style="left:201.00px;top:434.00px;font-size:13px;line-height:13px;color:#000;font-weight:normal;white-space:pre;">NAMA</div>
<div style="left:419px;top:386px;width:63px;height:63px;overflow:hidden"><div style="left:8.50px;top:26.27px;font-size:11.5px;line-height:11.5px;color:#000;font-weight:bold;white-space:pre;transform:scaleX(1.1);transform-origin:0 0;position:absolute;">Awal kerj</div></div>
<div style="left:483px;top:386px;width:63px;height:63px;overflow:hidden"><div style="left:8.00px;top:26.27px;font-size:11.5px;line-height:11.5px;color:#000;font-weight:bold;white-space:pre;transform:scaleX(1.1);transform-origin:0 0;position:absolute;">akhi kerja</div></div>
<div style="left:547px;top:386px;width:63px;height:63px;overflow:hidden"><div style="left:8.50px;top:26.27px;font-size:11.5px;line-height:11.5px;color:#000;font-weight:bold;white-space:pre;transform:scaleX(1.1);transform-origin:0 0;position:absolute;">Bulan be</div></div>
<div style="left:611px;top:386px;width:130px;height:63px;overflow:hidden"><div style="left:8.00px;top:26.27px;font-size:11.5px;line-height:11.5px;color:#000;font-weight:bold;white-space:pre;transform:scaleX(1.1);transform-origin:0 0;position:absolute;">NIK</div></div>
<div style="left:742px;top:386px;width:63px;height:63px;overflow:hidden"><div style="left:8.00px;top:26.27px;font-size:11.5px;line-height:11.5px;color:#000;font-weight:bold;white-space:pre;transform:scaleX(1.1);transform-origin:0 0;position:absolute;">OS</div></div>
<div style="left:806px;top:386px;width:63px;height:63px;overflow:hidden"><div style="left:8.00px;top:26.27px;font-size:11.5px;line-height:11.5px;color:#000;font-weight:bold;white-space:pre;transform:scaleX(1.1);transform-origin:0 0;position:absolute;">PTKP</div></div>
<div style="left:870px;top:386px;width:140px;height:63px;overflow:hidden"><div style="left:8.00px;top:26.27px;font-size:11.5px;line-height:11.5px;color:#000;font-weight:bold;white-space:pre;transform:scaleX(1.1);transform-origin:0 0;position:absolute;">Gaji</div></div>
<div style="left:1205px;top:386px;width:118px;height:63px;overflow:hidden"><div style="left:8.00px;top:26.27px;font-size:11.5px;line-height:11.5px;color:#000;font-weight:bold;white-space:pre;transform:scaleX(1.1);transform-origin:0 0;position:absolute;">Jumlah</div></div>
<div style="left:1324px;top:386px;width:96px;height:63px;overflow:hidden"><div style="left:6.00px;top:26.27px;font-size:11.5px;line-height:11.5px;color:#000;font-weight:bold;white-space:pre;transform:scaleX(1.1);transform-origin:0 0;position:absolute;">Bonus/THR</div></div>
<div style="left:1108px;top:386px;width:96px;height:63px;overflow:hidden"><div style="left:4.00px;top:26.27px;font-size:11.5px;line-height:11.5px;color:#000;font-weight:bold;white-space:pre;transform:scaleX(1.1);transform-origin:0 0;position:absolute;">Ass. dtg perus</div></div>
<div style="left:1712px;top:386px;width:96px;height:63px;overflow:hidden"><div style="left:8.00px;top:26.27px;font-size:11.5px;line-height:11.5px;color:#000;font-weight:bold;white-space:pre;transform:scaleX(1.1);transform-origin:0 0;position:absolute;">Gaji</div></div>
<div style="left:1011px;top:386px;width:96px;height:63px;overflow:hidden"><div style="left:6.00px;top:18.77px;font-size:11.5px;line-height:11.5px;color:#000;font-weight:bold;white-space:pre;transform:scaleX(1.1);transform-origin:0 0;position:absolute;">Tunjangan</div><div style="left:2.00px;top:34.77px;font-size:11.5px;line-height:11.5px;color:#000;font-weight:bold;white-space:pre;transform:scaleX(1.1);transform-origin:0 0;position:absolute;">Lain</div></div>
<div style="left:1421px;top:386px;width:96px;height:63px;overflow:hidden"><div style="left:6.00px;top:18.77px;font-size:11.5px;line-height:11.5px;color:#000;font-weight:bold;white-space:pre;transform:scaleX(1.1);transform-origin:0 0;position:absolute;">PPh Psl 21</div><div style="left:2.00px;top:34.77px;font-size:11.5px;line-height:11.5px;color:#000;font-weight:bold;white-space:pre;transform:scaleX(1.1);transform-origin:0 0;position:absolute;">dipotong</div></div>
<div style="left:1809px;top:386px;width:97px;height:63px;overflow:hidden"><div style="left:6.00px;top:18.77px;font-size:11.5px;line-height:11.5px;color:#000;font-weight:bold;white-space:pre;transform:scaleX(1.1);transform-origin:0 0;position:absolute;">Tunjangan</div><div style="left:2.00px;top:34.77px;font-size:11.5px;line-height:11.5px;color:#000;font-weight:bold;white-space:pre;transform:scaleX(1.1);transform-origin:0 0;position:absolute;">Lain</div></div>
<div style="left:1520.00px;top:434.70px;font-size:13px;line-height:13px;color:#000;font-weight:normal;white-space:pre;">JHT</div>
<div style="left:1617.00px;top:434.70px;font-size:13px;line-height:13px;color:#000;font-weight:normal;white-space:pre;">JP</div>
<div style="left:181px;top:432px;width:16px;height:16px;background:#f4f4f4;border:1px solid #c8c8c8;box-sizing:border-box"><svg width="16" height="16" viewBox="0 0 16 16" style="position:absolute;left:0;top:0"><path d="M4.5 6.5h7l-3.5 4z" fill="#606060"/></svg></div>
<div style="left:401px;top:432px;width:16px;height:16px;background:#f4f4f4;border:1px solid #c8c8c8;box-sizing:border-box"><svg width="16" height="16" viewBox="0 0 16 16" style="position:absolute;left:0;top:0"><path d="M4.5 6.5h7l-3.5 4z" fill="#606060"/></svg></div>
<div style="left:465px;top:432px;width:16px;height:16px;background:#f4f4f4;border:1px solid #c8c8c8;box-sizing:border-box"><svg width="16" height="16" viewBox="0 0 16 16" style="position:absolute;left:0;top:0"><path d="M6 5h7l-2.6 3.2v4.3l-1.8-1V8.2z" fill="#3c3c3c"/><path d="M3 10h4l-2 2.5z" fill="#3c3c3c"/></svg></div>
<div style="left:529px;top:432px;width:16px;height:16px;background:#f4f4f4;border:1px solid #c8c8c8;box-sizing:border-box"><svg width="16" height="16" viewBox="0 0 16 16" style="position:absolute;left:0;top:0"><path d="M6 5h7l-2.6 3.2v4.3l-1.8-1V8.2z" fill="#3c3c3c"/><path d="M3 10h4l-2 2.5z" fill="#3c3c3c"/></svg></div>
<div style="left:593px;top:432px;width:16px;height:16px;background:#f4f4f4;border:1px solid #c8c8c8;box-sizing:border-box"><svg width="16" height="16" viewBox="0 0 16 16" style="position:absolute;left:0;top:0"><path d="M4.5 6.5h7l-3.5 4z" fill="#606060"/></svg></div>
<div style="left:724px;top:432px;width:16px;height:16px;background:#f4f4f4;border:1px solid #c8c8c8;box-sizing:border-box"><svg width="16" height="16" viewBox="0 0 16 16" style="position:absolute;left:0;top:0"><path d="M4.5 6.5h7l-3.5 4z" fill="#606060"/></svg></div>
<div style="left:788px;top:432px;width:16px;height:16px;background:#f4f4f4;border:1px solid #c8c8c8;box-sizing:border-box"><svg width="16" height="16" viewBox="0 0 16 16" style="position:absolute;left:0;top:0"><path d="M4.5 6.5h7l-3.5 4z" fill="#606060"/></svg></div>
<div style="left:852px;top:432px;width:16px;height:16px;background:#f4f4f4;border:1px solid #c8c8c8;box-sizing:border-box"><svg width="16" height="16" viewBox="0 0 16 16" style="position:absolute;left:0;top:0"><path d="M4.5 6.5h7l-3.5 4z" fill="#606060"/></svg></div>
<div style="left:993px;top:432px;width:16px;height:16px;background:#f4f4f4;border:1px solid #c8c8c8;box-sizing:border-box"><svg width="16" height="16" viewBox="0 0 16 16" style="position:absolute;left:0;top:0"><path d="M4.5 6.5h7l-3.5 4z" fill="#606060"/></svg></div>
<div style="left:1090px;top:432px;width:16px;height:16px;background:#f4f4f4;border:1px solid #c8c8c8;box-sizing:border-box"><svg width="16" height="16" viewBox="0 0 16 16" style="position:absolute;left:0;top:0"><path d="M4.5 6.5h7l-3.5 4z" fill="#606060"/></svg></div>
<div style="left:1187px;top:432px;width:16px;height:16px;background:#f4f4f4;border:1px solid #c8c8c8;box-sizing:border-box"><svg width="16" height="16" viewBox="0 0 16 16" style="position:absolute;left:0;top:0"><path d="M4.5 6.5h7l-3.5 4z" fill="#606060"/></svg></div>
<div style="left:1306px;top:432px;width:16px;height:16px;background:#f4f4f4;border:1px solid #c8c8c8;box-sizing:border-box"><svg width="16" height="16" viewBox="0 0 16 16" style="position:absolute;left:0;top:0"><path d="M4.5 6.5h7l-3.5 4z" fill="#606060"/></svg></div>
<div style="left:1403px;top:432px;width:16px;height:16px;background:#f4f4f4;border:1px solid #c8c8c8;box-sizing:border-box"><svg width="16" height="16" viewBox="0 0 16 16" style="position:absolute;left:0;top:0"><path d="M4.5 6.5h7l-3.5 4z" fill="#606060"/></svg></div>
<div style="left:1500px;top:432px;width:16px;height:16px;background:#f4f4f4;border:1px solid #c8c8c8;box-sizing:border-box"><svg width="16" height="16" viewBox="0 0 16 16" style="position:absolute;left:0;top:0"><path d="M6 5h7l-2.6 3.2v4.3l-1.8-1V8.2z" fill="#3c3c3c"/><path d="M3 10h4l-2 2.5z" fill="#3c3c3c"/></svg></div>
<div style="left:1597px;top:432px;width:16px;height:16px;background:#f4f4f4;border:1px solid #c8c8c8;box-sizing:border-box"><svg width="16" height="16" viewBox="0 0 16 16" style="position:absolute;left:0;top:0"><path d="M4.5 6.5h7l-3.5 4z" fill="#606060"/></svg></div>
<div style="left:1694px;top:432px;width:16px;height:16px;background:#f4f4f4;border:1px solid #c8c8c8;box-sizing:border-box"><svg width="16" height="16" viewBox="0 0 16 16" style="position:absolute;left:0;top:0"><path d="M4.5 6.5h7l-3.5 4z" fill="#606060"/></svg></div>
<div style="left:1791px;top:432px;width:16px;height:16px;background:#f4f4f4;border:1px solid #c8c8c8;box-sizing:border-box"><svg width="16" height="16" viewBox="0 0 16 16" style="position:absolute;left:0;top:0"><path d="M4.5 6.5h7l-3.5 4z" fill="#606060"/></svg></div>
<div style="left:1889px;top:432px;width:16px;height:16px;background:#f4f4f4;border:1px solid #c8c8c8;box-sizing:border-box"><svg width="16" height="16" viewBox="0 0 16 16" style="position:absolute;left:0;top:0"><path d="M4.5 6.5h7l-3.5 4z" fill="#606060"/></svg></div>
<svg style="left:611px;top:450px" width="7" height="7"><path d="M0 0h6L0 6z" fill="#1d7a2f"/></svg>
<svg style="left:611px;top:471px" width="7" height="7"><path d="M0 0h6L0 6z" fill="#1d7a2f"/></svg>
<svg style="left:1205px;top:471px" width="7" height="7"><path d="M0 0h6L0 6z" fill="#1d7a2f"/></svg>
<svg style="left:611px;top:492px" width="7" height="7"><path d="M0 0h6L0 6z" fill="#1d7a2f"/></svg>
<svg style="left:1205px;top:492px" width="7" height="7"><path d="M0 0h6L0 6z" fill="#1d7a2f"/></svg>
<svg style="left:611px;top:513px" width="7" height="7"><path d="M0 0h6L0 6z" fill="#1d7a2f"/></svg>
<svg style="left:1205px;top:513px" width="7" height="7"><path d="M0 0h6L0 6z" fill="#1d7a2f"/></svg>
<svg style="left:611px;top:530px" width="7" height="7"><path d="M0 0h6L0 6z" fill="#1d7a2f"/></svg>
<svg style="left:1205px;top:530px" width="7" height="7"><path d="M0 0h6L0 6z" fill="#1d7a2f"/></svg>
<svg style="left:611px;top:551px" width="7" height="7"><path d="M0 0h6L0 6z" fill="#1d7a2f"/></svg>
<svg style="left:1205px;top:551px" width="7" height="7"><path d="M0 0h6L0 6z" fill="#1d7a2f"/></svg>
<svg style="left:611px;top:572px" width="7" height="7"><path d="M0 0h6L0 6z" fill="#1d7a2f"/></svg>
<svg style="left:1205px;top:572px" width="7" height="7"><path d="M0 0h6L0 6z" fill="#1d7a2f"/></svg>
<svg style="left:611px;top:589px" width="7" height="7"><path d="M0 0h6L0 6z" fill="#1d7a2f"/></svg>
<svg style="left:1205px;top:589px" width="7" height="7"><path d="M0 0h6L0 6z" fill="#1d7a2f"/></svg>
<svg style="left:611px;top:606px" width="7" height="7"><path d="M0 0h6L0 6z" fill="#1d7a2f"/></svg>
<svg style="left:806px;top:551px" width="7" height="7"><path d="M0 0h6L0 6z" fill="#1d7a2f"/></svg>
<div style="left:1107px;top:550px;width:98px;height:22px;border:2px solid #107c41;box-sizing:border-box"></div>
<div style="left:1202px;top:569px;width:5px;height:5px;background:#107c41;border:1px solid #fff"></div>
<div style="left:0px;top:259px;width:1898px;height:16px;background:#0d0b0a"></div>
<div style="left:0px;top:275px;width:25px;height:703px;background:#0d0b0a"></div>
<svg style="left:13px;top:263px" width="10" height="10"><path d="M9.5 0.5v9H0.5z" fill="#7a7a7a"/></svg>
<div style="left:25px;top:259px;width:1px;height:16px;background:#3a3a3a"></div>
<div style="left:-220.50px;top:261.42px;font-size:12.5px;line-height:12.5px;color:#e6e6e6;font-weight:normal;white-space:pre;width:600px;text-align:center;">A</div>
<div style="left:134px;top:259px;width:1px;height:16px;background:#3a3a3a"></div>
<div style="left:-134.00px;top:261.42px;font-size:12.5px;line-height:12.5px;color:#e6e6e6;font-weight:normal;white-space:pre;width:600px;text-align:center;">B</div>
<div style="left:198px;top:259px;width:1px;height:16px;background:#3a3a3a"></div>
<div style="left:8.00px;top:261.42px;font-size:12.5px;line-height:12.5px;color:#e6e6e6;font-weight:normal;white-space:pre;width:600px;text-align:center;">C</div>
<div style="left:418px;top:259px;width:1px;height:16px;background:#3a3a3a"></div>
<div style="left:150.00px;top:261.42px;font-size:12.5px;line-height:12.5px;color:#e6e6e6;font-weight:normal;white-space:pre;width:600px;text-align:center;">D</div>
<div style="left:482px;top:259px;width:1px;height:16px;background:#3a3a3a"></div>
<div style="left:214.00px;top:261.42px;font-size:12.5px;line-height:12.5px;color:#e6e6e6;font-weight:normal;white-space:pre;width:600px;text-align:center;">E</div>
<div style="left:546px;top:259px;width:1px;height:16px;background:#3a3a3a"></div>
<div style="left:278.00px;top:261.42px;font-size:12.5px;line-height:12.5px;color:#e6e6e6;font-weight:normal;white-space:pre;width:600px;text-align:center;">F</div>
<div style="left:610px;top:259px;width:1px;height:16px;background:#3a3a3a"></div>
<div style="left:375.50px;top:261.42px;font-size:12.5px;line-height:12.5px;color:#e6e6e6;font-weight:normal;white-space:pre;width:600px;text-align:center;">G</div>
<div style="left:741px;top:259px;width:1px;height:16px;background:#3a3a3a"></div>
<div style="left:473.00px;top:261.42px;font-size:12.5px;line-height:12.5px;color:#e6e6e6;font-weight:normal;white-space:pre;width:600px;text-align:center;">H</div>
<div style="left:805px;top:259px;width:1px;height:16px;background:#3a3a3a"></div>
<div style="left:537.00px;top:261.42px;font-size:12.5px;line-height:12.5px;color:#e6e6e6;font-weight:normal;white-space:pre;width:600px;text-align:center;">I</div>
<div style="left:869px;top:259px;width:1px;height:16px;background:#3a3a3a"></div>
<div style="left:639.50px;top:261.42px;font-size:12.5px;line-height:12.5px;color:#e6e6e6;font-weight:normal;white-space:pre;width:600px;text-align:center;">CE</div>
<div style="left:1010px;top:259px;width:1px;height:16px;background:#3a3a3a"></div>
<div style="left:758.50px;top:261.42px;font-size:12.5px;line-height:12.5px;color:#e6e6e6;font-weight:normal;white-space:pre;width:600px;text-align:center;">CF</div>
<div style="left:1107px;top:259px;width:97px;height:16px;background:#6b6b6b"></div>
<div style="left:1107px;top:273px;width:97px;height:2px;background:#1e8c4e"></div>
<div style="left:1107px;top:259px;width:1px;height:16px;background:#3a3a3a"></div>
<div style="left:855.50px;top:261.42px;font-size:12.5px;line-height:12.5px;color:#e6e6e6;font-weight:normal;white-space:pre;width:600px;text-align:center;">CG</div>
<div style="left:1204px;top:259px;width:1px;height:16px;background:#3a3a3a"></div>
<div style="left:963.50px;top:261.42px;font-size:12.5px;line-height:12.5px;color:#e6e6e6;font-weight:normal;white-space:pre;width:600px;text-align:center;">CH</div>
<div style="left:1323px;top:259px;width:1px;height:16px;background:#3a3a3a"></div>
<div style="left:1071.50px;top:261.42px;font-size:12.5px;line-height:12.5px;color:#e6e6e6;font-weight:normal;white-space:pre;width:600px;text-align:center;">CI</div>
<div style="left:1420px;top:259px;width:1px;height:16px;background:#3a3a3a"></div>
<div style="left:1168.50px;top:261.42px;font-size:12.5px;line-height:12.5px;color:#e6e6e6;font-weight:normal;white-space:pre;width:600px;text-align:center;">CJ</div>
<div style="left:1517px;top:259px;width:1px;height:16px;background:#3a3a3a"></div>
<div style="left:1265.50px;top:261.42px;font-size:12.5px;line-height:12.5px;color:#e6e6e6;font-weight:normal;white-space:pre;width:600px;text-align:center;">CK</div>
<div style="left:1614px;top:259px;width:1px;height:16px;background:#3a3a3a"></div>
<div style="left:1362.50px;top:261.42px;font-size:12.5px;line-height:12.5px;color:#e6e6e6;font-weight:normal;white-space:pre;width:600px;text-align:center;">CL</div>
<div style="left:1711px;top:259px;width:1px;height:16px;background:#3a3a3a"></div>
<div style="left:1459.50px;top:261.42px;font-size:12.5px;line-height:12.5px;color:#e6e6e6;font-weight:normal;white-space:pre;width:600px;text-align:center;">CU</div>
<div style="left:1808px;top:259px;width:1px;height:16px;background:#3a3a3a"></div>
<div style="left:1557.00px;top:261.42px;font-size:12.5px;line-height:12.5px;color:#e6e6e6;font-weight:normal;white-space:pre;width:600px;text-align:center;">CV</div>
<div style="left:866px;top:259px;width:1px;height:16px;background:#5a5a5a"></div>
<div style="left:0px;top:292px;width:25px;height:1px;background:#3a3a3a"></div>
<div style="left:-287.50px;top:277.12px;font-size:12.5px;line-height:12.5px;color:#e6e6e6;font-weight:normal;white-space:pre;width:600px;text-align:center;">1</div>
<div style="left:0px;top:309px;width:25px;height:1px;background:#3a3a3a"></div>
<div style="left:-287.50px;top:294.12px;font-size:12.5px;line-height:12.5px;color:#e6e6e6;font-weight:normal;white-space:pre;width:600px;text-align:center;">2</div>
<div style="left:0px;top:347px;width:25px;height:1px;background:#3a3a3a"></div>
<div style="left:-287.50px;top:332.12px;font-size:12.5px;line-height:12.5px;color:#e6e6e6;font-weight:normal;white-space:pre;width:600px;text-align:center;">3</div>
<div style="left:0px;top:385px;width:25px;height:1px;background:#3a3a3a"></div>
<div style="left:-287.50px;top:370.12px;font-size:12.5px;line-height:12.5px;color:#e6e6e6;font-weight:normal;white-space:pre;width:600px;text-align:center;">4</div>
<div style="left:0px;top:447px;width:25px;height:1px;background:#4e4848"></div>
<div style="left:0px;top:451px;width:25px;height:1px;background:#4e4848"></div>
<div style="left:-287.50px;top:434.12px;font-size:12.5px;line-height:12.5px;color:#e6e6e6;font-weight:normal;white-space:pre;width:600px;text-align:center;">5</div>
<div style="left:0px;top:468px;width:25px;height:1px;background:#4e4848"></div>
<div style="left:0px;top:472px;width:25px;height:1px;background:#4e4848"></div>
<div style="left:-287.50px;top:455.12px;font-size:12.5px;line-height:12.5px;color:#7ad6d0;font-weight:normal;white-space:pre;width:600px;text-align:center;">40</div>
<div style="left:0px;top:489px;width:25px;height:1px;background:#4e4848"></div>
<div style="left:0px;top:493px;width:25px;height:1px;background:#4e4848"></div>
<div style="left:-287.50px;top:476.12px;font-size:12.5px;line-height:12.5px;color:#7ad6d0;font-weight:normal;white-space:pre;width:600px;text-align:center;">44</div>
<div style="left:0px;top:512px;width:25px;height:1px;background:#3a3a3a"></div>
<div style="left:-287.50px;top:497.12px;font-size:12.5px;line-height:12.5px;color:#7ad6d0;font-weight:normal;white-space:pre;width:600px;text-align:center;">46</div>
<div style="left:0px;top:527px;width:25px;height:1px;background:#4e4848"></div>
<div style="left:0px;top:531px;width:25px;height:1px;background:#4e4848"></div>
<div style="left:-287.50px;top:514.12px;font-size:12.5px;line-height:12.5px;color:#7ad6d0;font-weight:normal;white-space:pre;width:600px;text-align:center;">47</div>
<div style="left:0px;top:548px;width:25px;height:1px;background:#4e4848"></div>
<div style="left:0px;top:552px;width:25px;height:1px;background:#4e4848"></div>
<div style="left:-287.50px;top:535.12px;font-size:12.5px;line-height:12.5px;color:#7ad6d0;font-weight:normal;white-space:pre;width:600px;text-align:center;">50</div>
<div style="left:0px;top:551px;width:25px;height:20px;background:#6a6765"></div>
<div style="left:23px;top:551px;width:2px;height:20px;background:#1e8c4e"></div>
<div style="left:0px;top:571px;width:25px;height:1px;background:#3a3a3a"></div>
<div style="left:-287.50px;top:556.12px;font-size:12.5px;line-height:12.5px;color:#a8e0e8;font-weight:normal;white-space:pre;width:600px;text-align:center;">52</div>
<div style="left:0px;top:586px;width:25px;height:1px;background:#4e4848"></div>
<div style="left:0px;top:590px;width:25px;height:1px;background:#4e4848"></div>
<div style="left:-287.50px;top:573.12px;font-size:12.5px;line-height:12.5px;color:#7ad6d0;font-weight:normal;white-space:pre;width:600px;text-align:center;">53</div>
<div style="left:0px;top:603px;width:25px;height:1px;background:#4e4848"></div>
<div style="left:0px;top:607px;width:25px;height:1px;background:#4e4848"></div>
<div style="left:-287.50px;top:590.12px;font-size:12.5px;line-height:12.5px;color:#7ad6d0;font-weight:normal;white-space:pre;width:600px;text-align:center;">55</div>
<div style="left:0px;top:624px;width:25px;height:1px;background:#4e4848"></div>
<div style="left:0px;top:628px;width:25px;height:1px;background:#4e4848"></div>
<div style="left:-287.50px;top:611.12px;font-size:12.5px;line-height:12.5px;color:#7ad6d0;font-weight:normal;white-space:pre;width:600px;text-align:center;">108</div>
<div style="left:0px;top:643px;width:25px;height:1px;background:#3a3a3a"></div>
<div style="left:-287.50px;top:628.12px;font-size:12.5px;line-height:12.5px;color:#e6e6e6;font-weight:normal;white-space:pre;width:600px;text-align:center;">222</div>
<div style="left:0px;top:660px;width:25px;height:1px;background:#3a3a3a"></div>
<div style="left:-287.50px;top:645.12px;font-size:12.5px;line-height:12.5px;color:#e6e6e6;font-weight:normal;white-space:pre;width:600px;text-align:center;">223</div>
<div style="left:0px;top:677px;width:25px;height:1px;background:#3a3a3a"></div>
<div style="left:-287.50px;top:662.12px;font-size:12.5px;line-height:12.5px;color:#e6e6e6;font-weight:normal;white-space:pre;width:600px;text-align:center;">224</div>
<div style="left:0px;top:694px;width:25px;height:1px;background:#3a3a3a"></div>
<div style="left:-287.50px;top:679.12px;font-size:12.5px;line-height:12.5px;color:#e6e6e6;font-weight:normal;white-space:pre;width:600px;text-align:center;">225</div>
<div style="left:0px;top:711px;width:25px;height:1px;background:#3a3a3a"></div>
<div style="left:-287.50px;top:696.12px;font-size:12.5px;line-height:12.5px;color:#e6e6e6;font-weight:normal;white-space:pre;width:600px;text-align:center;">226</div>
<div style="left:0px;top:728px;width:25px;height:1px;background:#3a3a3a"></div>
<div style="left:-287.50px;top:713.12px;font-size:12.5px;line-height:12.5px;color:#e6e6e6;font-weight:normal;white-space:pre;width:600px;text-align:center;">227</div>
<div style="left:0px;top:745px;width:25px;height:1px;background:#3a3a3a"></div>
<div style="left:-287.50px;top:730.12px;font-size:12.5px;line-height:12.5px;color:#e6e6e6;font-weight:normal;white-space:pre;width:600px;text-align:center;">228</div>
<div style="left:0px;top:762px;width:25px;height:1px;background:#3a3a3a"></div>
<div style="left:-287.50px;top:747.12px;font-size:12.5px;line-height:12.5px;color:#e6e6e6;font-weight:normal;white-space:pre;width:600px;text-align:center;">229</div>
<div style="left:0px;top:786px;width:25px;height:1px;background:#3a3a3a"></div>
<div style="left:-287.50px;top:771.12px;font-size:12.5px;line-height:12.5px;color:#e6e6e6;font-weight:normal;white-space:pre;width:600px;text-align:center;">230</div>
<div style="left:0px;top:803px;width:25px;height:1px;background:#3a3a3a"></div>
<div style="left:-287.50px;top:788.12px;font-size:12.5px;line-height:12.5px;color:#e6e6e6;font-weight:normal;white-space:pre;width:600px;text-align:center;">231</div>
<div style="left:0px;top:820px;width:25px;height:1px;background:#3a3a3a"></div>
<div style="left:-287.50px;top:805.12px;font-size:12.5px;line-height:12.5px;color:#e6e6e6;font-weight:normal;white-space:pre;width:600px;text-align:center;">232</div>
<div style="left:0px;top:837px;width:25px;height:1px;background:#3a3a3a"></div>
<div style="left:-287.50px;top:822.12px;font-size:12.5px;line-height:12.5px;color:#e6e6e6;font-weight:normal;white-space:pre;width:600px;text-align:center;">233</div>
<div style="left:0px;top:854px;width:25px;height:1px;background:#3a3a3a"></div>
<div style="left:-287.50px;top:839.12px;font-size:12.5px;line-height:12.5px;color:#e6e6e6;font-weight:normal;white-space:pre;width:600px;text-align:center;">234</div>
<div style="left:0px;top:871px;width:25px;height:1px;background:#3a3a3a"></div>
<div style="left:-287.50px;top:856.12px;font-size:12.5px;line-height:12.5px;color:#e6e6e6;font-weight:normal;white-space:pre;width:600px;text-align:center;">235</div>
<div style="left:0px;top:888px;width:25px;height:1px;background:#3a3a3a"></div>
<div style="left:-287.50px;top:873.12px;font-size:12.5px;line-height:12.5px;color:#e6e6e6;font-weight:normal;white-space:pre;width:600px;text-align:center;">236</div>
<div style="left:0px;top:905px;width:25px;height:1px;background:#3a3a3a"></div>
<div style="left:-287.50px;top:890.12px;font-size:12.5px;line-height:12.5px;color:#e6e6e6;font-weight:normal;white-space:pre;width:600px;text-align:center;">237</div>
<div style="left:0px;top:922px;width:25px;height:1px;background:#3a3a3a"></div>
<div style="left:-287.50px;top:907.12px;font-size:12.5px;line-height:12.5px;color:#e6e6e6;font-weight:normal;white-space:pre;width:600px;text-align:center;">238</div>
<div style="left:0px;top:939px;width:25px;height:1px;background:#3a3a3a"></div>
<div style="left:-287.50px;top:924.12px;font-size:12.5px;line-height:12.5px;color:#e6e6e6;font-weight:normal;white-space:pre;width:600px;text-align:center;">239</div>
<div style="left:0px;top:956px;width:25px;height:1px;background:#3a3a3a"></div>
<div style="left:-287.50px;top:941.12px;font-size:12.5px;line-height:12.5px;color:#e6e6e6;font-weight:normal;white-space:pre;width:600px;text-align:center;">240</div>
<div style="left:0px;top:973px;width:25px;height:1px;background:#3a3a3a"></div>
<div style="left:-287.50px;top:958.12px;font-size:12.5px;line-height:12.5px;color:#e6e6e6;font-weight:normal;white-space:pre;width:600px;text-align:center;">241</div>
<div style="left:0px;top:990px;width:25px;height:1px;background:#3a3a3a"></div>
<div style="left:-287.50px;top:975.12px;font-size:12.5px;line-height:12.5px;color:#e6e6e6;font-weight:normal;white-space:pre;width:600px;text-align:center;">242</div>
<div style="left:1898px;top:259px;width:22px;height:16px;background:#1d1714"></div>
<div style="left:1898px;top:275px;width:22px;height:703px;background:#121010"></div>
<svg style="left:1904px;top:263px" width="11" height="9"><path d="M5.5 1L10.5 8H0.5z" fill="#a0a0a0"/></svg>
<div style="left:1905px;top:279px;width:9px;height:684px;background:#9d9d9d;border-radius:4.5px"></div>
<svg style="left:1904px;top:967px" width="11" height="9"><path d="M0.5 1h10L5.5 8z" fill="#a0a0a0"/></svg>
<div style="left:0px;top:978px;width:1920px;height:32px;background:#110e0c"></div>
<svg style="left:27px;top:987px" width="12" height="12"><path d="M8 1L3 6l5 5" stroke="#9a9a9a" stroke-width="1.3" fill="none"/></svg>
<svg style="left:58px;top:987px" width="12" height="12"><path d="M4 1l5 5-5 5" stroke="#d0d0d0" stroke-width="1.3" fill="none"/></svg>
<div style="left:123.23px;top:987.15px;font-size:14px;line-height:14px;color:#e8e8e8;font-weight:normal;white-space:pre;transform:scaleX(1.2158);transform-origin:0 0;">8</div>
<div style="left:144px;top:984px;width:1px;height:20px;background:#4a4a4a"></div>
<div style="left:156.32px;top:987.15px;font-size:14px;line-height:14px;color:#e8e8e8;font-weight:normal;white-space:pre;transform:scaleX(1.0753);transform-origin:0 0;">9</div>
<div style="left:178px;top:984px;width:1px;height:20px;background:#4a4a4a"></div>
<div style="left:190.80px;top:987.15px;font-size:14px;line-height:14px;color:#e8e8e8;font-weight:normal;white-space:pre;transform:scaleX(0.9732);transform-origin:0 0;">JAN-MEI</div>
<div style="left:262px;top:984px;width:1px;height:20px;background:#4a4a4a"></div>
<div style="left:274.53px;top:987.15px;font-size:14px;line-height:14px;color:#e8e8e8;font-weight:normal;white-space:pre;transform:scaleX(0.9105);transform-origin:0 0;">8. CORETAX</div>
<div style="left:362.5px;top:984px;width:1px;height:20px;background:#4a4a4a"></div>
<div style="left:373.03px;top:987.15px;font-size:14px;line-height:14px;color:#e8e8e8;font-weight:normal;white-space:pre;transform:scaleX(0.9217);transform-origin:0 0;">11. RESIGN</div>
<div style="left:454.3px;top:984px;width:1px;height:20px;background:#4a4a4a"></div>
<div style="left:466.02px;top:987.15px;font-size:14px;line-height:14px;color:#e8e8e8;font-weight:normal;white-space:pre;transform:scaleX(0.9329);transform-origin:0 0;">12. GAJI CBN</div>
<div style="left:561px;top:984px;width:1px;height:20px;background:#4a4a4a"></div>
<div style="left:573.05px;top:987.15px;font-size:14px;line-height:14px;color:#e8e8e8;font-weight:normal;white-space:pre;transform:scaleX(0.9026);transform-origin:0 0;">12. INSENTIF PERFORMANCE</div>
<div style="left:768px;top:984px;width:1px;height:20px;background:#4a4a4a"></div>
<div style="left:782.07px;top:987.15px;font-size:14px;line-height:14px;color:#e8e8e8;font-weight:normal;white-space:pre;transform:scaleX(0.8850);transform-origin:0 0;">12. INSENTIF SALES</div>
<div style="left:916px;top:984px;width:1px;height:20px;background:#4a4a4a"></div>
<div style="left:929.01px;top:987.15px;font-size:14px;line-height:14px;color:#e8e8e8;font-weight:normal;white-space:pre;transform:scaleX(0.9407);transform-origin:0 0;">12. GAJI CBN (DATA BARU)</div>
<div style="left:1111px;top:984px;width:1px;height:20px;background:#4a4a4a"></div>
<div style="left:1115px;top:975px;width:202px;height:31px;background:#f5f9f1;border-radius:0 0 6px 6px"></div>
<div style="left:1124.20px;top:983.75px;font-size:14px;line-height:14px;color:#253525;font-weight:normal;white-space:pre;transform:scaleX(0.9466);transform-origin:0 0;">JAN - DESEMBER FINAL 2025</div>
<div style="left:1124px;top:1001px;width:185px;height:2px;background:#2e7d32"></div>
<div style="left:1124px;top:1003px;width:185px;height:1px;background:#b0e6b0"></div>
<div style="left:1320px;top:984px;width:1px;height:20px;background:#4a4a4a"></div>
<div style="left:1326px;top:982px;width:257px;height:23px;background:#7ed957;border-radius:4px"></div>
<div style="left:1336.81px;top:987.15px;font-size:14px;line-height:14px;color:#1a2e12;font-weight:normal;white-space:pre;transform:scaleX(0.9200);transform-origin:0 0;">JAN - DESEMBER PPH SETAHUN FINA</div>
<div style="left:1587px;top:984px;width:1px;height:20px;background:#4a4a4a"></div>
<div style="left:1601.94px;top:987.15px;font-size:14px;line-height:14px;color:#e8e8e8;font-weight:normal;white-space:pre;transform:scaleX(0.9065);transform-origin:0 0;">valic</div>
<svg style="left:1636px;top:990px" width="13" height="5"><circle cx="2" cy="2.5" r="1.5" fill="#ddd"/><circle cx="6.5" cy="2.5" r="1.5" fill="#ddd"/><circle cx="11" cy="2.5" r="1.5" fill="#ddd"/></svg>
<svg style="left:1667px;top:987px" width="14" height="14"><path d="M7 1v12M1 7h12" stroke="#d0d0d0" stroke-width="1.3"/></svg>
<svg style="left:1705px;top:986px" width="4" height="16"><circle cx="2" cy="3" r="1.2" fill="#ccc"/><circle cx="2" cy="8" r="1.2" fill="#ccc"/><circle cx="2" cy="13" r="1.2" fill="#ccc"/></svg>
<svg style="left:1727px;top:988px" width="10" height="12"><path d="M8 1v10L1 6z" fill="#9a9a9a"/></svg>
<div style="left:1836px;top:989px;width:17px;height:9px;background:#9a9a9a;border-radius:5px"></div>
<svg style="left:1885px;top:988px" width="10" height="12"><path d="M2 1v10l7-5z" fill="#9a9a9a"/></svg>
<div style="left:0px;top:1010px;width:1920px;height:22px;background:#161312"></div>
<div style="left:0px;top:1010px;width:1920px;height:1px;background:#2a2522"></div>
<div style="left:10.63px;top:1015.54px;font-size:12px;line-height:12px;color:#e0e0e0;font-weight:normal;white-space:pre;transform:scaleX(0.9015);transform-origin:0 0;">Ready</div>
<div style="left:57.55px;top:1015.54px;font-size:12px;line-height:12px;color:#e0e0e0;font-weight:normal;white-space:pre;transform:scaleX(0.9915);transform-origin:0 0;">Filter Mode</div>
<div style="left:132.93px;top:1015.54px;font-size:12px;line-height:12px;color:#e0e0e0;font-weight:normal;white-space:pre;transform:scaleX(0.9427);transform-origin:0 0;">Calculate</div>
<svg style="left:199px;top:1013px" width="16" height="16"><circle cx="8" cy="3" r="1.6" stroke="#ddd" fill="none"/><path d="M2 6l6 1.5L14 6M8 7.5v3l-3.5 4.5M8 10.5l3.5 4.5M10 9l4 5M14 9l-4 5" stroke="#ddd" stroke-width="1.1" fill="none"/></svg>
<div style="left:217.74px;top:1015.07px;font-size:11.5px;line-height:11.5px;color:#f0f0f0;font-weight:bold;white-space:pre;transform:scaleX(0.9178);transform-origin:0 0;">Accessibility: Investigate</div>
<div style="left:1620px;top:1011px;width:40px;height:21px;background:#2a2624"></div>
<svg style="left:1632px;top:1014px" width="15" height="15"><path d="M1 1h13v13H1zM1 5.3h13M1 9.6h13M5.3 1v13M9.6 1v13" stroke="#e0e0e0" stroke-width="1.1" fill="none"/></svg>
<svg style="left:1672px;top:1014px" width="15" height="15"><path d="M1 1h13v13H1zM4 4h7v7H4zM5 6h5M5 8h5" stroke="#e0e0e0" stroke-width="1.1" fill="none"/></svg>
<svg style="left:1712px;top:1014px" width="15" height="15"><path d="M1 1h13v13H1zM1 8h7V1" stroke="#e0e0e0" stroke-width="1.1" fill="none"/></svg>
<div style="left:1746px;top:1021px;width:8px;height:1px;background:#ddd"></div>
<div style="left:1758px;top:1021px;width:101px;height:1px;background:#888"></div>
<div style="left:1807px;top:1015px;width:5px;height:13px;background:#bbb"></div>
<svg style="left:1862px;top:1016px" width="11" height="11"><path d="M5.5 0v11M0 5.5h11" stroke="#ddd" stroke-width="1.1"/></svg>
<div style="left:1884.17px;top:1015.54px;font-size:12px;line-height:12px;color:#e0e0e0;font-weight:normal;white-space:pre;transform:scaleX(0.9184);transform-origin:0 0;">100%</div>
<div style="left:0;top:1032px;width:1920px;height:48px;background:linear-gradient(90deg,#241d1a 0%,#201c1a 22%,#1d1d1f 40%,#1d1e21 80%,#221f1e 88%,#2b2219 95%,#2c2218 100%)"></div>
<div style="left:0px;top:1032px;width:1920px;height:1px;background:#2c2826"></div>
<svg style="left:17px;top:1040px" width="28" height="28" viewBox="0 0 28 28"><ellipse cx="13" cy="19" rx="11" ry="6" fill="#c9d9f2"/><circle cx="10" cy="15" r="6" fill="#dfe8f7"/><circle cx="17" cy="16" r="5" fill="#d4e0f5"/></svg>
<div style="left:30px;top:1038px;width:16px;height:16px;border-radius:8px;background:#f08b8b"></div>
<div style="left:-262.00px;top:1041.19px;font-size:11px;line-height:11px;color:#5a1010;font-weight:normal;white-space:pre;width:600px;text-align:center;">6</div>
<div style="left:50.05px;top:1041.84px;font-size:12px;line-height:12px;color:#f0f0f0;font-weight:normal;white-space:pre;transform:scaleX(0.9474);transform-origin:0 0;">30°C</div>
<div style="left:49.55px;top:1057.84px;font-size:12px;line-height:12px;color:#d0d0d0;font-weight:normal;white-space:pre;transform:scaleX(0.9868);transform-origin:0 0;">Berawan</div>
<svg style="left:640px;top:1045px" width="23" height="23" viewBox="0 0 23 23"><rect x="0" y="0" width="10.8" height="10.8" fill="#4cc2ff"/><rect x="12" y="0" width="10.8" height="10.8" fill="#4cc2ff"/><rect x="0" y="12" width="10.8" height="10.8" fill="#3aa8f0"/><rect x="12" y="12" width="10.8" height="10.8" fill="#3aa8f0"/></svg>
<div style="left:675px;top:1040px;width:220px;height:32px;border-radius:16px;background:#3a3531;box-sizing:border-box;border:1px solid #4a4440"></div>
<svg style="left:686px;top:1048px" width="17" height="17" viewBox="0 0 17 17"><circle cx="7" cy="7" r="5.5" stroke="#e0e0e0" stroke-width="1.5" fill="none"/><path d="M11 11l5 5" stroke="#e0e0e0" stroke-width="1.6"/></svg>
<div style="left:712.00px;top:1050.15px;font-size:14px;line-height:14px;color:#d0d0d0;font-weight:normal;white-space:pre;">Search</div>
<svg style="left:846px;top:1043px" width="44" height="28" viewBox="0 0 44 28"><ellipse cx="24" cy="24" rx="18" ry="3" fill="#c7a37a"/><path d="M6 10l6-5 14 2 8 4 2 8h-3l-1-5-6 2v7h-2v-7l-10-1-2 7h-2l1-8-3-2z" fill="#d8d8e6"/><path d="M12 8l2 10M17 7l1 10M22 8v9M27 9l-1 8" stroke="#555" stroke-width="1.3"/></svg>
<svg style="left:907px;top:1045px" width="26" height="24" viewBox="0 0 26 24"><rect x="0" y="7" width="16" height="16" rx="1" fill="#7a7a7a"/><rect x="9" y="1" width="16" height="15" rx="1" fill="#e8e8e8"/><rect x="9" y="7" width="7" height="9" fill="#b0b0b0"/></svg>
<svg style="left:950px;top:1045px" width="26" height="22" viewBox="0 0 26 22"><path d="M0 2h9l3 3h14v17H0z" fill="#f2b824"/><rect x="0" y="7" width="26" height="15" fill="#fcd04a"/><rect x="8" y="15" width="10" height="5" fill="#2e86de"/></svg>
<div style="left:961px;top:1072px;width:6px;height:3px;background:#999;border-radius:2px"></div>
<svg style="left:993px;top:1043px" width="27" height="27" viewBox="0 0 27 27"><circle cx="13.5" cy="13.5" r="12.5" fill="#1a8ad8"/><path d="M3 15c1-9 13-12 20-5 2 3 0 7-4 7-5 0-5-4-2-5-6-1-10 3-8 9-4-1-6-3-6-6z" fill="#4fdc7a"/><path d="M6 19c3 6 13 8 19 0-4 3-12 3-14-3" fill="#0f5fb5"/></svg>
<svg style="left:1038px;top:1043px" width="25" height="26" viewBox="0 0 25 26"><path d="M7 5a5.5 5.5 0 0 1 11 0" stroke="#3b9be8" stroke-width="1.8" fill="none"/><rect x="1" y="5" width="23" height="20" rx="2" fill="#f3f3f3"/><rect x="7" y="10" width="5" height="5" fill="#f25022"/><rect x="13" y="10" width="5" height="5" fill="#7fba00"/><rect x="7" y="16" width="5" height="5" fill="#00a4ef"/><rect x="13" y="16" width="5" height="5" fill="#ffb900"/></svg>
<svg style="left:1082px;top:1043px" width="27" height="27" viewBox="0 0 27 27"><circle cx="13.5" cy="13" r="11" stroke="#25d366" stroke-width="2.6" fill="none"/><path d="M4 25l2-6 4 4z" fill="#25d366"/><path d="M9 8c0 5 4 10 9 10l1.5-2-3-1.5-1 1c-2-1-3-2-4-4l1-1-1.5-3z" fill="#25d366"/></svg>
<svg style="left:1126px;top:1043px" width="27" height="27" viewBox="0 0 27 27"><circle cx="13.5" cy="13.5" r="12.5" fill="#db4437"/><path d="M13.5 13.5L2.5 19.5A12.5 12.5 0 0 1 2.3 7.5z" fill="#0f9d58"/><path d="M13.5 13.5l11 -1A12.5 12.5 0 0 1 8 25z" fill="#f4c20d"/><circle cx="13.5" cy="13.5" r="6" fill="#fff"/><circle cx="13.5" cy="13.5" r="4.6" fill="#4285f4"/></svg>
<div style="left:1136px;top:1072px;width:6px;height:3px;background:#999;border-radius:2px"></div>
<svg style="left:1170px;top:1043px" width="26" height="27" viewBox="0 0 26 27"><circle cx="13" cy="13.5" r="12.5" fill="#e8394f"/><path d="M7 20l6-13 6 13" stroke="#fff" stroke-width="2.4" fill="none"/></svg>
<svg style="left:1215px;top:1044px" width="25" height="25" viewBox="0 0 25 25"><rect x="0" y="0" width="25" height="25" fill="#e8322f"/><path d="M8 8l5 4.5L8 17l-2-2 3-2.5-3-2.5zM13 8l5 4.5L13 17l-2-2 3-2.5-3-2.5z" fill="#fff"/></svg>
<div style="left:1250px;top:1036px;width:40px;height:40px;border-radius:4px;background:#3a3532"></div>
<svg style="left:1257px;top:1045px" width="26" height="24" viewBox="0 0 26 24"><rect x="7" y="0" width="19" height="24" rx="2" fill="#21a366"/><rect x="7" y="0" width="19" height="8" fill="#33c481"/><rect x="7" y="16" width="19" height="8" fill="#107c41"/><rect x="0" y="5" width="14" height="14" rx="1.5" fill="#185c37"/><path d="M3.5 8l6 8M9.5 8l-6 8" stroke="#fff" stroke-width="1.6"/></svg>
<div style="left:1263px;top:1075px;width:16px;height:3px;background:#4cc2ff;border-radius:2px"></div>
<svg style="left:1696px;top:1050px" width="13" height="9" viewBox="0 0 13 9"><path d="M1 8l5.5-6 5.5 6" stroke="#e0e0e0" stroke-width="1.4" fill="none"/></svg>
<svg style="left:1724px;top:1047px" width="20" height="16" viewBox="0 0 20 16"><path d="M4 14a4 4 0 0 1 0-8 6 6 0 0 1 11 1 3.5 3.5 0 0 1 1 7z" fill="#8a8a8a"/><path d="M2 1l16 15" stroke="#ddd" stroke-width="1.4"/></svg>
<svg style="left:1756px;top:1046px" width="20" height="18" viewBox="0 0 20 18"><rect x="1" y="3" width="15" height="11" stroke="#e0e0e0" stroke-width="1.3" fill="none"/><path d="M6 17h6M9 14v3" stroke="#e0e0e0" stroke-width="1.3"/><rect x="13" y="0.5" width="5" height="8" fill="#1f1c1a" stroke="#e0e0e0" stroke-width="1.2"/></svg>
<svg style="left:1781px;top:1047px" width="18" height="16" viewBox="0 0 18 16"><path d="M1 5h3l5-4v14l-5-4H1z" stroke="#e0e0e0" stroke-width="1.3" fill="none"/><path d="M11.5 5.5a3 3 0 0 1 0 5M13.5 3a6.5 6.5 0 0 1 0 10" stroke="#e0e0e0" stroke-width="1.3" fill="none"/></svg>
<div style="left:1847.62px;top:1041.64px;font-size:12px;line-height:12px;color:#f0f0f0;font-weight:normal;white-space:pre;transform:scaleX(0.9754);transform-origin:0 0;">14:37</div>
<div style="left:1815.10px;top:1057.44px;font-size:12px;line-height:12px;color:#f0f0f0;font-weight:normal;white-space:pre;transform:scaleX(1.0372);transform-origin:0 0;">31/01/2026</div>
<svg style="left:1884px;top:1046px" width="17" height="18" viewBox="0 0 17 18"><path d="M3 13V8a5.5 5.5 0 0 1 11 0v5l1.5 2h-14zM6.5 16a2 2 0 0 0 4 0" stroke="#e0e0e0" stroke-width="1.3" fill="none"/></svg>
</body></html>
